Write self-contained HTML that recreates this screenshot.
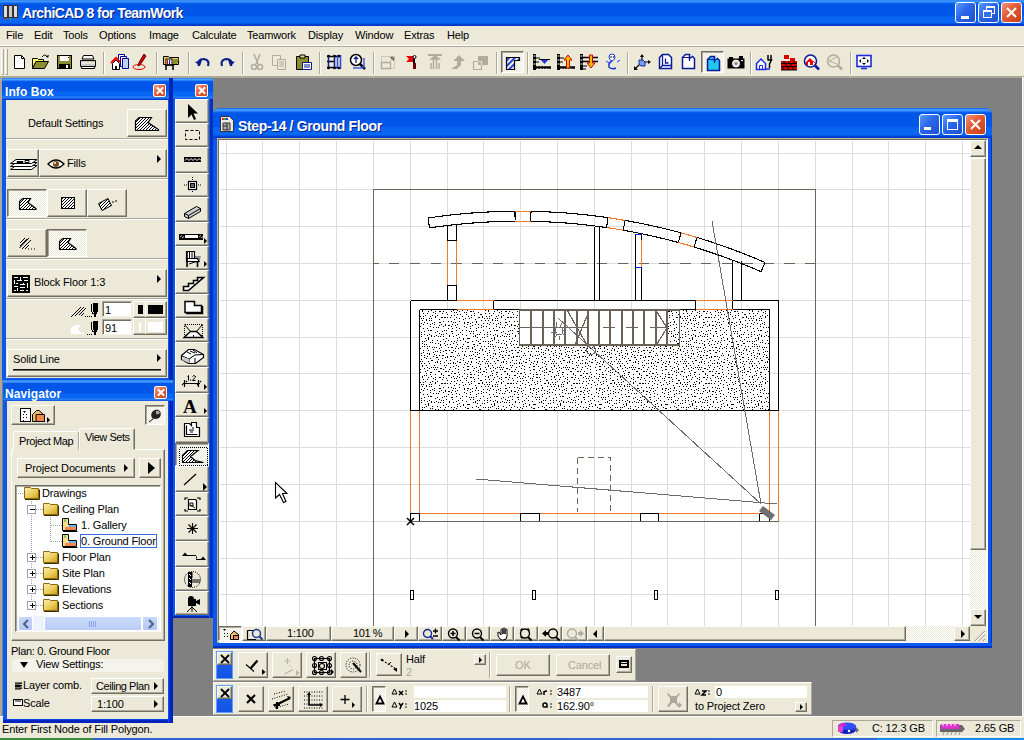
<!DOCTYPE html>
<html><head><meta charset="utf-8">
<style>
*{margin:0;padding:0;box-sizing:border-box}
html,body{width:1024px;height:740px;overflow:hidden;background:#808080;font-family:"Liberation Sans",sans-serif;font-size:11px;color:#000;letter-spacing:-0.15px;-webkit-font-smoothing:antialiased}
.a{position:absolute}
svg{position:absolute;overflow:visible}
#title{left:0;top:0;width:1024px;height:26px;background:linear-gradient(#2a7af5 0,#3d95ff 1px,#3d95ff 2px,#0a60f0 3px,#0056e8 5px,#0056e8 15px,#0866f4 17px,#0866f4 23px,#0046d8 24px,#0032c0 26px)}
#title .t{left:22px;top:5px;color:#fff;font-weight:bold;font-size:14px;letter-spacing:-0.6px;text-shadow:1px 1px 0 #0a1e80}
.xpb{width:21px;height:21px;border:1px solid #fff;border-radius:3px;background:linear-gradient(135deg,#5a9aff,#2a66ea 45%,#1e50d0)}
.xpc{background:linear-gradient(135deg,#f3907a,#e25a34 45%,#c63d16)}
#menu{left:0;top:26px;width:1024px;height:19px;background:#ece9d8}
#menu span{position:absolute;top:3px}
.bg{background:#ece9d8}
.btn{background:#ece9d8;border-style:solid;border-width:1px;border-color:#fff #716f64 #716f64 #fff;box-shadow:inset -1px -1px 0 #aca899}
.prs{background-color:#f2f0e6;background-image:repeating-conic-gradient(#fff 0 25%,#ece9d8 0 50%);background-size:2px 2px;border-style:solid;border-width:1px;border-color:#716f64 #fff #fff #716f64;box-shadow:inset 1px 1px 0 #aca899}
.sepv{width:2px;border-left:1px solid #aca899;border-right:1px solid #fff}
.seph{height:2px;border-top:1px solid #aca899;border-bottom:1px solid #fff}
.tw{background:#0b4fe0}
.twt{background:linear-gradient(#1a6af0 0,#4aa0ff 1px,#4aa0ff 2px,#0a60f0 3px,#0056e8 4px,#0056e8 13px,#0866f4 14px,#0866f4 18px,#2a7cf6 19px,#2a7cf6 20px,#0040d0 21px)}
.twt .tt{position:absolute;left:4px;top:4px;color:#fff;font-weight:bold;font-size:12px;letter-spacing:0.1px}
.cls{width:13px;height:13px;border:1px solid #fff;border-radius:2px;background:linear-gradient(135deg,#f09a80,#e0582f 55%,#c94a25)}
.cls:before,.cls:after{content:"";position:absolute;left:5px;top:1px;width:2px;height:9px;background:#fff;transform:rotate(45deg)}
.cls:after{transform:rotate(-45deg)}
.tri{width:0;height:0;border-style:solid;border-width:4px 0 4px 4px;border-color:transparent transparent transparent #000}
.inp{background:#fff;border-style:solid;border-width:1px;border-color:#aca899 #f4f2ea #f4f2ea #aca899;box-shadow:inset 1px 1px 0 #716f64}
</style></head><body>

<!-- ===== TITLE BAR ===== -->
<div id="title" class="a">
  <svg style="left:3px;top:4px" width="16" height="17" viewBox="0 0 16 17">
    <rect x="0.5" y="1.5" width="4" height="12" fill="#ddd" stroke="#333"/><rect x="5.5" y="1.5" width="4" height="12" fill="#ccc" stroke="#333"/><rect x="10.5" y="1.5" width="4" height="12" fill="#ddd" stroke="#333"/>
    <path d="M1 14l1.5 2.5 1.5-2.5z" fill="#b33"/><path d="M6 14l1.5 2.5 1.5-2.5z" fill="#3a3"/><path d="M11 14l1.5 2.5 1.5-2.5z" fill="#36c"/>
  </svg>
  <div class="a t">ArchiCAD 8 for TeamWork</div>
  <div class="a xpb" style="left:955px;top:2px"><div class="a" style="left:5px;top:13px;width:8px;height:3px;background:#fff"></div></div>
  <div class="a xpb" style="left:978px;top:2px"><div class="a" style="left:7px;top:3px;width:9px;height:8px;border:1px solid #fff;border-top-width:2px"></div><div class="a" style="left:4px;top:7px;width:9px;height:8px;border:1px solid #fff;border-top-width:2px;background:#3670e8"></div></div>
  <div class="a xpb xpc" style="left:1001px;top:2px"><svg style="left:4px;top:4px" width="11" height="11"><path d="M1 1L10 10M10 1L1 10" stroke="#fff" stroke-width="2"/></svg></div>
</div>

<!-- ===== MENU ===== -->
<div id="menu" class="a">
  <span style="left:6px">File</span><span style="left:34px">Edit</span><span style="left:63px">Tools</span><span style="left:99px">Options</span><span style="left:149px">Image</span><span style="left:192px">Calculate</span><span style="left:247px">Teamwork</span><span style="left:308px">Display</span><span style="left:355px">Window</span><span style="left:404px">Extras</span><span style="left:447px">Help</span>
</div>
<div class="a" style="left:0;top:45px;width:1024px;height:1px;background:#fff"></div>
<div class="a" style="left:0;top:46px;width:1024px;height:1px;background:#aca899"></div>
<div class="a bg" style="left:0;top:47px;width:1024px;height:30px"></div>
<div class="a" style="left:0;top:76px;width:1024px;height:2px;background:#aca899"></div>
<div class="a" style="left:1022px;top:77px;width:1px;height:640px;background:#fff"></div><div class="a" style="left:1023px;top:77px;width:1px;height:640px;background:#ece9d8"></div>

<!-- TOOLBAR_PLACEHOLDER -->
<div class="a" style="left:1px;top:49px;width:3px;height:26px;border-left:1px solid #fff;border-right:1px solid #aca899;border-bottom:1px solid #aca899"></div><div class="a" style="left:5px;top:49px;width:3px;height:26px;border-left:1px solid #fff;border-right:1px solid #aca899;border-bottom:1px solid #aca899"></div>
<svg style="left:10px;top:53px" width="20" height="18" viewBox="0 0 20 18"><path d="M4.5 2.5H11.5L14.5 5.5V15.5H4.5Z" fill="#fff" stroke="#000"/><path d="M11.5 2.5V5.5H14.5" fill="none" stroke="#000"/></svg>
<svg style="left:31px;top:53px" width="20" height="18" viewBox="0 0 20 18"><path d="M1.5 5.5H6.5L7.5 6.5H12.5V8.5H5L1.5 15.5Z" fill="#ffff60" stroke="#000"/><path d="M1.5 15.5L5 8.5H17.5L13.5 15.5Z" fill="#8c8c30" stroke="#000"/><path d="M11 4Q14 0 16 4" fill="none" stroke="#000"/><path d="M15 3l2 2 1-3z" fill="#000"/></svg>
<svg style="left:55px;top:53px" width="20" height="18" viewBox="0 0 20 18"><rect x="2.5" y="2.5" width="14" height="13" fill="#8c8c30" stroke="#000"/><rect x="5" y="3" width="9" height="5" fill="#fff"/><rect x="4" y="11" width="11" height="5" fill="#000"/><rect x="11" y="12" width="2" height="3" fill="#fff"/><rect x="13" y="4" width="1" height="1" fill="#000"/></svg>
<svg style="left:78px;top:53px" width="20" height="18" viewBox="0 0 20 18"><path d="M5.5 2.5H14.5L16 6H4Z" fill="#fff" stroke="#000"/><path d="M2.5 7.5H17.5V13.5H2.5Z" fill="#c8c8c8" stroke="#000"/><path d="M3 10h14" stroke="#fff"/><path d="M3.5 13.5H16.5V15.5H3.5Z" fill="#fff" stroke="#000"/><rect x="13" y="9" width="2" height="1" fill="#ff0"/></svg>
<div class="a sepv" style="left:103px;top:52px;height:22px"></div>
<svg style="left:110px;top:53px" width="20" height="18" viewBox="0 0 20 18"><path d="M8.5 1.5H14.5V11.5H8.5Z" fill="#fff" stroke="#0000a0"/><path d="M10.5 3.5H16.5V13.5H10.5Z" fill="#fff" stroke="#0000a0"/><path d="M12.5 5.5H18.5V15.5H12.5Z" fill="#c0d0ff" stroke="#0000a0"/><path d="M2.5 16.5V10.5L6 7L9.5 10.5V16.5Z" fill="#fff" stroke="#000"/><path d="M1 10L6 5L10 9" stroke="#e00" stroke-width="2" fill="none"/><rect x="5" y="13" width="2" height="3" fill="#000"/></svg>
<svg style="left:131px;top:53px" width="20" height="18" viewBox="0 0 20 18"><ellipse cx="8" cy="14" rx="6" ry="2.5" fill="none" stroke="#e00"/><path d="M13 1L15 3L9 12L7 13L7.5 10.5Z" fill="#d00" stroke="#600"/></svg>
<div class="a sepv" style="left:156px;top:52px;height:22px"></div>
<svg style="left:162px;top:53px" width="20" height="18" viewBox="0 0 20 18"><path d="M1.5 3.5H6.5L7.5 4.5H16.5V11.5H1.5Z" fill="#f0d060" stroke="#000"/><path d="M11 6L17 6L15 11H11Z" fill="#8c8c30"/><rect x="4" y="6" width="6" height="6" fill="#fff" stroke="#000"/><rect x="5" y="7" width="1" height="4" fill="#e00"/><rect x="7" y="7" width="1" height="4" fill="#00c"/><path d="M3 12h9M4 12v5M11 12v5" stroke="#000" stroke-width="1.5"/></svg>
<div class="a sepv" style="left:188px;top:52px;height:22px"></div>
<svg style="left:194px;top:53px" width="20" height="18" viewBox="0 0 20 18"><path d="M5 13Q3 6 10 6Q16 7 14 13" fill="none" stroke="#0a1e8a" stroke-width="2.2"/><path d="M1 9L6 13L8 7Z" fill="#0a1e8a"/></svg>
<svg style="left:216px;top:53px" width="20" height="18" viewBox="0 0 20 18"><path d="M15 13Q17 6 10 6Q4 7 6 13" fill="none" stroke="#0a1e8a" stroke-width="2.2"/><path d="M19 9L14 13L12 7Z" fill="#0a1e8a"/></svg>
<div class="a sepv" style="left:242px;top:52px;height:22px"></div>
<svg style="left:247px;top:53px" width="20" height="18" viewBox="0 0 20 18"><path d="M7 1L11 11M13 1L9 11" stroke="#b0ad9e" stroke-width="1.5"/><circle cx="7" cy="14" r="2.5" fill="none" stroke="#b0ad9e" stroke-width="1.5"/><circle cx="13" cy="14" r="2.5" fill="none" stroke="#b0ad9e" stroke-width="1.5"/></svg>
<svg style="left:270px;top:53px" width="20" height="18" viewBox="0 0 20 18"><path d="M2.5 2.5H10.5V12.5H2.5Z" fill="none" stroke="#b0ad9e"/><path d="M7.5 6.5H15.5V16.5H7.5Z" fill="#ece9d8" stroke="#b0ad9e"/><path d="M9 9h5M9 11h5M9 13h5" stroke="#b0ad9e"/></svg>
<svg style="left:294px;top:53px" width="20" height="18" viewBox="0 0 20 18"><path d="M2.5 3.5H14.5V16.5H2.5Z" fill="#8c8c30" stroke="#000"/><path d="M6 2h5v3H6z" fill="#e0e0a0" stroke="#000"/><path d="M8.5 9.5H17.5V16.5H8.5Z" fill="#fff" stroke="#0a1e8a"/><path d="M10 12h6M10 14h6" stroke="#0a1e8a"/></svg>
<div class="a sepv" style="left:319px;top:52px;height:22px"></div>
<svg style="left:324px;top:53px" width="20" height="18" viewBox="0 0 20 18"><path d="M3 3.5H15M3 8.5H10M3 14.5H15" stroke="#000" stroke-width="1.5"/><path d="M4.5 2V16M10.5 2V16" stroke="#0a1e8a" stroke-width="1.5"/><path d="M13.5 2V16M16.5 2V16" stroke="#2a4ae0" stroke-width="1.5"/><g fill="#000"><circle cx="4.5" cy="3" r="1.3"/><circle cx="10.5" cy="3" r="1.3"/><circle cx="15" cy="3" r="1.3"/><circle cx="4.5" cy="15" r="1.3"/><circle cx="10.5" cy="15" r="1.3"/><circle cx="15" cy="15" r="1.3"/></g></svg>
<svg style="left:348px;top:53px" width="20" height="18" viewBox="0 0 20 18"><circle cx="8" cy="7" r="5.5" fill="#fff" stroke="#000" stroke-width="1.5"/><path d="M12 11L17 16" stroke="#000" stroke-width="2.5"/><path d="M8 4V10M6 6l2-2 2 2" stroke="#0a1e8a" stroke-width="1.3" fill="none"/><path d="M16 5V15M14 13l2 2" stroke="#2a4ae0" stroke-width="1.3" fill="none"/><path d="M5 15H14" stroke="#2a4ae0" stroke-width="1.3"/></svg>
<div class="a sepv" style="left:373px;top:52px;height:22px"></div>
<svg style="left:378px;top:53px" width="20" height="18" viewBox="0 0 20 18"><path d="M3.5 3.5H16.5V15.5H3.5Z" fill="none" stroke="#b0ad9e" stroke-dasharray="1 1"/><path d="M3.5 9.5H12.5V15.5H3.5Z" fill="none" stroke="#b0ad9e" stroke-width="1.3"/><path d="M12 4h4v4M16 4l-4 4" stroke="#b0ad9e"/></svg>
<svg style="left:402px;top:53px" width="20" height="18" viewBox="0 0 20 18"><path d="M4 3L12 3L12 9L4 9L7 6Z" fill="#e00"/><path d="M12 3V16" stroke="#000" stroke-width="2"/><path d="M11 10h3v6h-3z" fill="#600"/><circle cx="12.5" cy="4" r="1.5" fill="#fff" stroke="#000"/></svg>
<svg style="left:425px;top:53px" width="20" height="18" viewBox="0 0 20 18"><path d="M3 2H17" stroke="#b0ad9e" stroke-width="2"/><path d="M6 6l4-3 4 3zM8.5 6V16M11.5 6V16M6 10V16M14 10V16" stroke="#b0ad9e" stroke-width="1.5" fill="#b0ad9e"/></svg>
<svg style="left:448px;top:53px" width="20" height="18" viewBox="0 0 20 18"><path d="M11 2L17 8H13V12L9 16H3L9 12V8H5Z" fill="#b0ad9e"/></svg>
<svg style="left:471px;top:53px" width="20" height="18" viewBox="0 0 20 18"><path d="M2.5 8.5H10.5V16.5H2.5Z" fill="none" stroke="#b0ad9e" stroke-width="1.2"/><path d="M7 3h10v9H7z" fill="#b0ad9e"/><path d="M7.5 8.5H10.5V12" stroke="#ece9d8" fill="none"/></svg>
<div class="a sepv" style="left:496px;top:52px;height:22px"></div>
<div class="a prs" style="left:501px;top:51px;width:23px;height:22px"><svg style="left:3px;top:3px" width="16" height="16" viewBox="0 0 16 16"><defs><pattern id="bh" width="4" height="4" patternUnits="userSpaceOnUse" patternTransform="rotate(45)"><rect width="2" height="4" fill="#2a40e0"/></pattern></defs><path d="M1.5 2.5H14.5V5.5H9.5V14.5H1.5Z" fill="url(#bh)" stroke="#000" stroke-width="1.2"/><path d="M9.5 5.5V14.5" stroke="#000"/></svg></div>
<div class="a sepv" style="left:527px;top:52px;height:22px"></div>
<svg style="left:532px;top:53px" width="20" height="18" viewBox="0 0 20 18"><rect x="1" y="1" width="3" height="16" fill="#000"/><path d="M1.5 3h2M1.5 7h2M1.5 11h2" stroke="#fff"/><path d="M4 14.5H19" stroke="#000" stroke-width="2.5"/><path d="M5 16h1M8 16h1M11 16h1M14 16h1" stroke="#fff"/><path d="M8 6H17L12.5 11Z" fill="#1a3ae0"/><path d="M7 6.5H18" stroke="#000"/><path d="M4 5h4M4 9h3" stroke="#000"/></svg>
<svg style="left:556px;top:53px" width="20" height="18" viewBox="0 0 20 18"><rect x="1" y="1" width="3" height="16" fill="#000"/><path d="M1.5 3h2M1.5 7h2M1.5 11h2" stroke="#fff"/><path d="M4 14.5H19" stroke="#000" stroke-width="2.5"/><path d="M5 16h1M8 16h1M11 16h1M14 16h1" stroke="#fff"/><path d="M8 7L12 2L16 7H13.5V15H10.5V7Z" fill="#f0c000" stroke="#c00"/><path d="M4 5h4M4 9h3" stroke="#000"/></svg>
<svg style="left:579px;top:53px" width="20" height="18" viewBox="0 0 20 18"><rect x="1" y="1" width="3" height="16" fill="#000"/><path d="M1.5 3h2M1.5 7h2M1.5 11h2" stroke="#fff"/><path d="M4 4.5H19M4 8.5H19" stroke="#000" stroke-width="1.5"/><path d="M8 10L12 15L16 10H13.5V2H10.5V10Z" fill="#f0c000" stroke="#c00"/><path d="M4 13h4M4 16h3" stroke="#000"/></svg>
<svg style="left:602px;top:53px" width="20" height="18" viewBox="0 0 20 18"><path d="M7 4Q7 1 10 1Q13 1 13 4Q13 7 10 8Q7 7 7 4Z" fill="#fff" stroke="#1a3ae0"/><path d="M10 8Q6 10 7 14Q10 17 14 15" fill="none" stroke="#1a3ae0" stroke-width="1.5"/><path d="M4 8l3 2M15 9l3-2" stroke="#1a3ae0"/><circle cx="9" cy="4" r="0.8" fill="#000"/><circle cx="11.5" cy="4" r="0.8" fill="#000"/></svg>
<div class="a sepv" style="left:627px;top:52px;height:22px"></div>
<svg style="left:632px;top:53px" width="20" height="18" viewBox="0 0 20 18"><path d="M10 2V9M10 9H18M10 9L3 16" stroke="#000" stroke-width="1.2"/><path d="M8 4l2-3 2 3zM16 7l3 2-3 2zM2 13l0 4 4 0z" fill="#000"/><path d="M7 7l4 0 2 2v4h-4l-2-2z" fill="#7a9af0" stroke="#1a2aa0"/></svg>
<svg style="left:656px;top:53px" width="20" height="18" viewBox="0 0 20 18"><path d="M3.5 4.5L6.5 1.5H12.5L15.5 4.5V15.5H3.5Z" fill="#fff" stroke="#0a1a9a" stroke-width="1.5"/><path d="M6.5 1.5V12.5H15.5M6.5 12.5L3.5 15.5M9.5 5.5V10H12.5" stroke="#0a1a9a" stroke-width="1.3" fill="none"/></svg>
<svg style="left:679px;top:53px" width="20" height="18" viewBox="0 0 20 18"><path d="M3.5 4.5L6.5 1.5H10.5L10.5 5.5L13.5 3.5L15.5 5.5V15.5H3.5Z" fill="#fff" stroke="#0a1a9a" stroke-width="1.5"/><path d="M3.5 4.5H10.5M10.5 5.5V8" stroke="#0a1a9a" stroke-width="1.2" fill="none"/></svg>
<div class="a prs" style="left:701px;top:51px;width:23px;height:22px"><svg style="left:2px;top:2px" width="18" height="18" viewBox="0 0 18 18"><path d="M3.5 5.5L6.5 2.5H10.5V6.5L13.5 4.5L15.5 6.5V16.5H3.5Z" fill="#20c8f0" stroke="#0a1a9a" stroke-width="1.5"/><path d="M3.5 5.5H10.5V9" stroke="#0a1a9a" stroke-width="1.2" fill="none"/></svg></div>
<svg style="left:726px;top:53px" width="20" height="18" viewBox="0 0 20 18"><rect x="1.5" y="5.5" width="17" height="10" fill="#000"/><path d="M3 4h4v2H3zM13 3h4v3h-4z" fill="#000"/><circle cx="10" cy="10.5" r="3.5" fill="#ddd" stroke="#fff"/><circle cx="10" cy="10.5" r="1.5" fill="#888"/><rect x="15" y="7" width="2" height="1" fill="#fff"/></svg>
<div class="a sepv" style="left:750px;top:52px;height:22px"></div>
<svg style="left:754px;top:53px" width="20" height="18" viewBox="0 0 20 18"><path d="M2.5 16.5V10.5L7 6L11.5 10.5V16.5Z" fill="#fff" stroke="#1a2ae0" stroke-width="1.5"/><path d="M5.5 16V12.5H8.5V16" stroke="#1a2ae0" fill="none"/><path d="M14 2V7M17 2V7M13.5 7H17.5L15.5 11V15" stroke="#000" stroke-width="1.5" fill="none"/><path d="M11 16h5" stroke="#1a2ae0" stroke-width="1.5"/></svg>
<svg style="left:779px;top:53px" width="20" height="18" viewBox="0 0 20 18"><rect x="2" y="8" width="16" height="9" fill="#d00"/><rect x="5" y="2" width="5" height="4" fill="#d00"/><rect x="11" y="5" width="5" height="3" fill="#d00"/><path d="M2 10.5H18M2 13.5H18M5 8V11M10 8V11M15 8V11M7 11V14M12 11V14M4 14V17M9 14V17M14 14V17" stroke="#000"/><path d="M2 17H18" stroke="#000"/></svg>
<svg style="left:802px;top:53px" width="20" height="18" viewBox="0 0 20 18"><circle cx="8.5" cy="8" r="6" fill="#fff" stroke="#0a1a9a" stroke-width="1.6"/><path d="M13 12.5L17 16.5" stroke="#0a1a9a" stroke-width="2.5"/><path d="M4 9L8 5L11 8V12H4Z" fill="#e00"/><rect x="6" y="9" width="2" height="3" fill="#fff"/><path d="M11 8l2 2" stroke="#e00"/></svg>
<svg style="left:825px;top:53px" width="20" height="18" viewBox="0 0 20 18"><circle cx="8.5" cy="8" r="6" fill="none" stroke="#b0ad9e" stroke-width="1.6"/><path d="M13 12.5L17 16.5" stroke="#b0ad9e" stroke-width="2.5"/><path d="M4 8L12 4M4 8L12 11" stroke="#b0ad9e"/></svg>
<div class="a sepv" style="left:850px;top:52px;height:22px"></div>
<svg style="left:855px;top:53px" width="20" height="18" viewBox="0 0 20 18"><rect x="2" y="2.5" width="14" height="11" fill="#fff" stroke="#1a2ae0" stroke-width="1.6"/><path d="M9 4l-2 2h4zM9 12l-2-2h4zM4 8l2-2v4zM14 8l-2-2v4z" fill="#000"/><path d="M6 15.5h6" stroke="#1a2ae0" stroke-width="1.5"/></svg>
<!-- /TOOLBAR -->

<!-- BOTTOM_PLACEHOLDER -->
<!-- ===== CONTROL BAR 1 ===== -->
<div class="a bg" style="left:213px;top:649px;width:423px;height:32px;border-top:1px solid #fff;border-left:1px solid #fff;border-right:1px solid #aca899;border-bottom:1px solid #aca899"></div>
<div class="a" style="left:216px;top:651px;width:17px;height:28px;border:1px solid #5aa0ff;background:linear-gradient(#2a6af5,#1a5cf0 50%,#1452e0)"></div>
<div class="a btn" style="left:217px;top:652px;width:15px;height:13px"><svg style="left:2px;top:1px" width="11" height="11"><path d="M1 1L9 9M9 1L1 9" stroke="#000" stroke-width="1.8"/></svg></div>
<div class="a btn" style="left:238px;top:652px;width:30px;height:26px"><svg style="left:0;top:0" width="30" height="26" viewBox="238 652 30 26"><path d="M245 663.5L253 670.5" stroke="#000" stroke-width="1.1"/><path d="M249.5 667.5L256.5 659.5" stroke="#000" stroke-width="2.2"/><path d="M261 668l3.5 3-3.5 3z" fill="#000"/></svg></div>
<div class="a btn" style="left:272px;top:652px;width:30px;height:26px"><svg style="left:0;top:0" width="30" height="26" viewBox="272 652 30 26"><path d="M286.5 657v6M283.5 660h6" stroke="#b8b5a6" stroke-width="1.1"/><path d="M288 664l1 1M290 666l1 1" stroke="#b8b5a6"/><path d="M283.5 673L292 668.5" stroke="#b8b5a6" stroke-width="1.3"/><path d="M295 669l3.5 3-3.5 3z" fill="#b8b5a6"/></svg></div>
<div class="a btn" style="left:306px;top:652px;width:30px;height:26px"><svg style="left:0;top:0" width="30" height="26" viewBox="306 652 30 26"><rect x="313.5" y="657.5" width="15" height="14" fill="none" stroke="#000" stroke-width="1.2"/><rect x="317.5" y="661.5" width="8" height="7" fill="none" stroke="#000"/><g fill="none" stroke="#000" stroke-width="1.1"><circle cx="313.5" cy="657.5" r="2"/><circle cx="320.5" cy="657.5" r="2"/><circle cx="328.5" cy="657.5" r="2"/><circle cx="313.5" cy="664.5" r="2"/><circle cx="328.5" cy="664.5" r="2"/><circle cx="313.5" cy="671.5" r="2"/><circle cx="320.5" cy="671.5" r="2"/><circle cx="328.5" cy="671.5" r="2"/><circle cx="321" cy="665" r="2.5"/></g><path d="M330 668l3 3-3 3z" fill="#000"/></svg></div>
<div class="a btn" style="left:340px;top:652px;width:27px;height:26px"><svg style="left:3px;top:3px" width="20" height="20" viewBox="0 0 20 20"><circle cx="9" cy="9" r="7" fill="none" stroke="#000" stroke-dasharray="1 1.5"/><circle cx="9" cy="9" r="4" fill="none" stroke="#000" stroke-dasharray="1 1.5"/><path d="M9 7L17 16" stroke="#000" stroke-width="2"/></svg></div>
<div class="a sepv" style="left:369px;top:652px;height:26px"></div>
<div class="a btn" style="left:376px;top:653px;width:26px;height:23px"><svg style="left:3px;top:3px" width="20" height="16" viewBox="0 0 20 16"><path d="M2 3L16 12" stroke="#000" stroke-dasharray="2 1.5" stroke-width="1.2"/><circle cx="2" cy="3" r="1.3"/><path d="M13 12l4-1v4z" fill="#000"/><path d="M8 8l3-3" stroke="#000"/></svg></div>
<div class="a" style="left:406px;top:653px">Half</div>
<div class="a" style="left:406px;top:666px;color:#aca899">2</div>
<div class="a btn" style="left:474px;top:654px;width:12px;height:11px"><div class="a tri" style="left:4px;top:2px;border-width:3px 0 3px 3px"></div></div>
<div class="a sepv" style="left:489px;top:652px;height:26px"></div>
<div class="a btn" style="left:496px;top:654px;width:54px;height:22px"><span class="a" style="left:18px;top:4px;color:#aca899">OK</span></div>
<div class="a btn" style="left:556px;top:654px;width:54px;height:22px"><span class="a" style="left:11px;top:4px;color:#aca899">Cancel</span></div>
<div class="a btn" style="left:616px;top:656px;width:16px;height:17px"><div class="a" style="left:2px;top:3px;width:10px;height:8px;border:2px solid #000;border-top-width:2px"></div><div class="a" style="left:4px;top:6px;width:6px;height:1px;background:#000"></div></div>

<!-- ===== CONTROL BAR 2 ===== -->
<div class="a bg" style="left:213px;top:682px;width:599px;height:33px;border-top:1px solid #fff;border-left:1px solid #fff;border-right:1px solid #aca899;border-bottom:1px solid #aca899"></div>
<div class="a" style="left:216px;top:685px;width:17px;height:28px;border:1px solid #5aa0ff;background:linear-gradient(#2a6af5,#1a5cf0 50%,#1452e0)"></div>
<div class="a btn" style="left:217px;top:686px;width:15px;height:13px"><svg style="left:2px;top:1px" width="11" height="11"><path d="M1 1L9 9M9 1L1 9" stroke="#000" stroke-width="1.8"/></svg></div>
<div class="a btn" style="left:238px;top:686px;width:26px;height:26px"><svg style="left:6px;top:6px" width="12" height="12" viewBox="0 0 12 12"><path d="M2 2L10 10M10 2L2 10" stroke="#000" stroke-width="2.2"/></svg></div>
<div class="a btn" style="left:268px;top:686px;width:26px;height:26px"><svg style="left:1px;top:2px" width="24" height="22" viewBox="0 0 24 22"><path d="M4 5l12 -3M2 10l16-5M3 16l16-6M5 19l14-4" stroke="#000" stroke-dasharray="1 1.5" fill="none"/><path d="M4 17L20 9" stroke="#000" stroke-width="2"/><path d="M17 7l4 1-2 3z" fill="#000"/><path d="M7 13v7M4 16h6" stroke="#000" stroke-width="2"/></svg></div>
<div class="a btn" style="left:298px;top:686px;width:30px;height:26px"><svg style="left:2px;top:2px" width="26" height="22" viewBox="0 0 26 22"><g stroke="#000" stroke-dasharray="1 1.5" fill="none"><path d="M3 3h20M3 7h20M3 11h20M3 15h20M3 19h20"/></g><path d="M8 4V16H21" stroke="#000" stroke-width="1.6" fill="none"/><path d="M6 6l2-3 2 3zM19 14l3 2-3 2z" fill="#000"/></svg></div>
<div class="a btn" style="left:332px;top:686px;width:30px;height:26px"><svg style="left:6px;top:5px" width="20" height="18" viewBox="0 0 20 18"><path d="M6 3v9M1.5 7.5h9" stroke="#000" stroke-width="1.3"/><path d="M13 10l3 3-3 3z" fill="#000"/></svg></div>
<div class="a sepv" style="left:366px;top:686px;height:26px"></div>
<div class="a prs" style="left:372px;top:686px;width:14px;height:26px"><svg style="left:1px;top:7px" width="12" height="12" viewBox="0 0 12 12"><path d="M1 10.5L6 0.5L11 10.5Z" fill="#000"/><path d="M4 8.5L6 4.5L8 8.5Z" fill="#fff"/></svg></div>
<svg style="left:391px;top:688px" width="22" height="22" viewBox="0 0 22 22"><path d="M3.5 1L6 6H1Z" fill="none" stroke="#000"/><path d="M8 3l4 4M12 3l-4 4" stroke="#000" stroke-width="1.5"/><circle cx="15" cy="3" r="0.8"/><circle cx="15" cy="6" r="0.8"/><path d="M3.5 14L6 19H1Z" fill="none" stroke="#000"/><path d="M8 15l2 3l2-3M10 18l-1 3" stroke="#000" stroke-width="1.5" fill="none"/><circle cx="15" cy="16" r="0.8"/><circle cx="15" cy="19" r="0.8"/></svg>
<div class="a" style="left:414px;top:686px;width:92px;height:12px;background:#fff"></div>
<div class="a" style="left:414px;top:700px;width:92px;height:12px;background:#fff"></div>
<span class="a" style="left:414px;top:700px">1025</span>
<div class="a sepv" style="left:509px;top:686px;height:26px"></div>
<div class="a prs" style="left:515px;top:686px;width:14px;height:26px"><svg style="left:1px;top:7px" width="12" height="12" viewBox="0 0 12 12"><path d="M1 10.5L6 0.5L11 10.5Z" fill="#000"/><path d="M4 8.5L6 4.5L8 8.5Z" fill="#fff"/></svg></div>
<svg style="left:534px;top:688px" width="22" height="22" viewBox="0 0 22 22"><path d="M5.5 1L8 6H3Z" fill="none" stroke="#000"/><path d="M10 3v4M10 4q1-1 3-1" stroke="#000" stroke-width="1.5" fill="none"/><circle cx="17" cy="3" r="0.8"/><circle cx="17" cy="6" r="0.8"/><path d="M9 17q0-2 2-2t2 2v2h-3q-1 0-1-1z" fill="none" stroke="#000" stroke-width="1.5"/><circle cx="17" cy="16" r="0.8"/><circle cx="17" cy="19" r="0.8"/></svg>
<div class="a" style="left:557px;top:686px;width:91px;height:12px;background:#fff"></div>
<div class="a" style="left:557px;top:700px;width:91px;height:12px;background:#fff"></div>
<span class="a" style="left:557px;top:686px">3487</span>
<span class="a" style="left:557px;top:700px">162.90°</span>
<div class="a sepv" style="left:652px;top:686px;height:26px"></div>
<div class="a btn" style="left:658px;top:686px;width:30px;height:26px"><svg style="left:5px;top:4px" width="20" height="18" viewBox="0 0 20 18"><path d="M4 2l3 3h5l3-3 1 1-3 4v4l3 4-2 1-3-4h-3l-3 4-2-1 3-4V7L3 3z" fill="#aca899"/><path d="M15 11l3 3-3 3z" fill="#aca899"/></svg></div>
<svg style="left:694px;top:688px" width="20" height="10" viewBox="0 0 20 10"><path d="M3.5 1L6 6H1Z" fill="none" stroke="#000"/><path d="M8 3h4l-4 4h4" stroke="#000" stroke-width="1.5" fill="none"/><circle cx="15" cy="3" r="0.8"/><circle cx="15" cy="6" r="0.8"/></svg>
<div class="a" style="left:715px;top:686px;width:92px;height:12px;background:#fff"></div>
<span class="a" style="left:716px;top:686px">0</span>
<span class="a" style="left:695px;top:700px">to Project Zero</span>
<div class="a btn" style="left:795px;top:702px;width:12px;height:10px"><div class="a tri" style="left:4px;top:1px;border-width:3px 0 3px 3px"></div></div>

<!-- ===== STATUS BAR ===== -->
<div class="a bg" style="left:0;top:716px;width:1024px;height:22px;border-top:1px solid #fff"></div>
<div class="a" style="left:2px;top:723px">Enter First Node of Fill Polygon.</div>
<div class="a" style="left:832px;top:720px;width:101px;height:17px;border:1px solid;border-color:#aca899 #fff #fff #aca899"></div>
<svg style="left:836px;top:722px" width="24" height="14" viewBox="0 0 24 14"><ellipse cx="11" cy="8" rx="9" ry="4" fill="#1020c0"/><rect x="2" y="4" width="18" height="4" fill="#2840e0"/><ellipse cx="11" cy="4" rx="9" ry="3.5" fill="#3050ff"/><path d="M2 3l6-2 3 2-6 2z" fill="#e020c0"/><rect x="2" y="4" width="5" height="6" fill="#e040d0"/><circle cx="13" cy="9" r="1.2" fill="#fff"/><path d="M20 5l3 3-3 3z" fill="#707070"/></svg>
<div class="a" style="left:872px;top:722px">C: 12.3 GB</div>
<div class="a" style="left:936px;top:720px;width:85px;height:17px;border:1px solid;border-color:#aca899 #fff #fff #aca899"></div>
<svg style="left:939px;top:722px" width="30" height="13" viewBox="0 0 30 13"><path d="M1 3h22l3 4-3 3H1z" fill="#666"/><path d="M2 2h18v5H2z" fill="#e030d0"/><path d="M3 3h2M7 3h2M11 3h2M15 3h2" stroke="#fff"/><path d="M5 10l-1 3M9 10l-1 3M13 10l-1 3M17 10l-1 3M21 10l-1 3" stroke="#999"/></svg>
<div class="a" style="left:975px;top:722px">2.65 GB</div>
<div class="a" style="left:0;top:738px;width:1024px;height:2px;background:linear-gradient(90deg,#3a8e3a 0,#3a8e3a 93px,#2f62d4 93px,#3168d8 877px,#1a8cec 877px)"></div>
<!-- /BOTTOM -->
<!-- ===== INFO BOX ===== -->
<div class="a" style="left:0;top:77px;width:2px;height:639px;background:#aca899"></div>
<div class="a tw" style="left:2px;top:78px;width:169px;height:302px;background:#0b58ee"></div>
<div class="a twt" style="left:2px;top:78px;width:169px;height:22px"><div class="tt" style="left:3px;top:7px">Info Box</div></div>
<div class="a cls" style="left:153px;top:84px"></div>
<div class="a" style="left:169px;top:78px;width:2px;height:302px;background:#0228b0"></div>
<div class="a bg" style="left:6px;top:100px;width:162px;height:278px"></div>
<!-- row1 -->
<div class="a" style="left:28px;top:117px">Default Settings</div>
<div class="a btn" style="left:127px;top:109px;width:40px;height:28px">
  <svg style="left:7px;top:7px" width="25" height="14" viewBox="0 0 25 14"><defs><pattern id="h1" width="3" height="3" patternUnits="userSpaceOnUse"><rect width="3" height="3" fill="#fff"/><path d="M2 0h1v1h-1zM1 1h1v1h-1zM0 2h1v1h-1z" fill="#000"/></pattern></defs><path d="M4 0.5H16.5L13 5.5L23.5 12.5V13.5H0.5V4Z" fill="url(#h1)" stroke="#000" stroke-width="1.2"/></svg>
</div>
<div class="a seph" style="left:6px;top:138px;width:162px"></div>
<!-- row2 -->
<div class="a btn" style="left:7px;top:149px;width:32px;height:28px">
  <svg style="left:2px;top:6px" width="28" height="16" viewBox="0 0 28 16"><g fill="#fff" stroke="#000"><path d="M0.5 13.5L6 9.5H27L21.5 13.5Z"/><path d="M0.5 10.5L6 6.5H27L21.5 10.5Z"/><path d="M0.5 7.5L6 3.5H27L21.5 7.5Z"/><path d="M7 5.5h6v1h-6zM15 4.5h4v2h-4z"/></g></svg>
</div>
<div class="a btn" style="left:39px;top:149px;width:128px;height:28px">
  <svg style="left:7px;top:9px" width="18" height="10" viewBox="0 0 18 10"><path d="M1 5Q9 -3 17 5Q9 13 1 5Z" fill="#fff" stroke="#000" stroke-width="1.3"/><circle cx="9" cy="5" r="3" fill="#7a4a10"/><circle cx="8" cy="4" r="1" fill="#fff"/></svg>
  <div class="a" style="left:27px;top:7px">Fills</div>
  <div class="a tri" style="left:117px;top:5px;border-width:4px 0 4px 4px"></div>
</div>
<div class="a seph" style="left:6px;top:178px;width:162px"></div>
<!-- row3 -->
<div class="a prs" style="left:7px;top:189px;width:40px;height:28px">
  <svg style="left:11px;top:8px" width="18" height="12" viewBox="0 0 18 12"><path d="M3.5 0.5H11.5L9 4.5L17 10.5V11.5H0.5V3.5Z" fill="url(#h1)" stroke="#000" stroke-width="1.2"/></svg>
</div>
<div class="a btn" style="left:47px;top:189px;width:40px;height:28px">
  <svg style="left:13px;top:7px" width="14" height="12" viewBox="0 0 14 12"><rect x="0.5" y="0.5" width="13" height="11" fill="url(#h1)" stroke="#000"/></svg>
</div>
<div class="a btn" style="left:87px;top:189px;width:40px;height:28px">
  <svg style="left:9px;top:5px" width="22" height="16" viewBox="0 0 22 16"><path d="M1.5 8.5L11 3.5L14.5 10.5L5 15.5Z" fill="url(#h1)" stroke="#000"/><path d="M15 7h2M18 6h2" stroke="#000"/></svg>
</div>
<div class="a seph" style="left:6px;top:218px;width:162px"></div>
<!-- row4 -->
<div class="a btn" style="left:7px;top:229px;width:40px;height:28px">
  <svg style="left:11px;top:7px" width="20" height="13" viewBox="0 0 20 13"><defs><pattern id="h2" width="3" height="3" patternUnits="userSpaceOnUse" patternTransform="rotate(45)"><rect width="1.2" height="3" fill="#000"/></pattern></defs><path d="M0.5 11L10 1M3 12L12 3M6 12L10 8M9 12h1M12 12h1M15 12h1" stroke="#000" fill="none"/><path d="M1 6L6 1M1 9L8 2" stroke="#000"/></svg>
</div>
<div class="a prs" style="left:47px;top:229px;width:40px;height:28px">
  <svg style="left:11px;top:8px" width="18" height="12" viewBox="0 0 18 12"><path d="M3.5 0.5H11.5L9 4.5L17 10.5V11.5H0.5V3.5Z" fill="url(#h1)" stroke="#000" stroke-width="1.2"/></svg>
</div>
<div class="a seph" style="left:6px;top:258px;width:162px"></div>
<!-- row5 -->
<div class="a btn" style="left:7px;top:269px;width:160px;height:28px">
  <svg style="left:4px;top:5px" width="18" height="18" viewBox="0 0 18 18"><rect width="18" height="18" fill="#000"/><g fill="#fff"><rect x="2" y="2" width="4" height="1"/><rect x="8" y="2" width="1" height="4"/><rect x="11" y="2" width="5" height="1"/><rect x="2" y="5" width="1" height="4"/><rect x="5" y="5" width="5" height="1"/><rect x="12" y="5" width="4" height="1"/><rect x="2" y="11" width="4" height="1"/><rect x="8" y="9" width="5" height="1"/><rect x="15" y="8" width="1" height="5"/><rect x="5" y="13" width="1" height="3"/><rect x="8" y="12" width="5" height="1"/><rect x="2" y="15" width="2" height="1"/><rect x="8" y="15" width="4" height="1"/><rect x="14" y="15" width="2" height="1"/><rect x="11" y="8" width="1" height="1"/><rect x="4" y="8" width="2" height="1"/></g></svg>
  <div class="a" style="left:26px;top:6px">Block Floor 1:3</div>
  <div class="a tri" style="left:149px;top:5px"></div>
</div>
<div class="a seph" style="left:6px;top:298px;width:162px"></div>
<!-- row6 -->
<svg style="left:70px;top:303px" width="32" height="32" viewBox="0 0 32 32" shape-rendering="crispEdges">
  <path d="M1 13h1v-1h1v-1h1v-1h1v-1h1v-1h1v-1h1v-1h1v-1h1v-1h1v1h-1v1h-1v1h-1v1h-1v1h-1v1h-1v1h-1v1h-1v1h-1v1h-1z" fill="#000"/>
  <path d="M4 13h1v-1h1v-1h1v-1h1v-1h1v-1h1v-1h1v-1h1v-1h1v-1h1v1h-1v1h-1v1h-1v1h-1v1h-1v1h-1v1h-1v1h-1v1h-1z" fill="#000"/>
  <path d="M7 13h1v-1h1v-1h1v-1h1v-1h1v-1h1v-1h1v-1h1v-1h1v1h-1v1h-1v1h-1v1h-1v1h-1v1h-1v1h-1z" fill="#000"/>
  <path d="M10 13h1v-1h1v-1h1v-1h1v1h-1v1h-1v1h-1z" fill="#000"/>
  <path d="M15 13h1v1h-1zM17 13h1v1h-1zM19 13h1v1h-1zM21 13h1v1h-1z" fill="#000"/>
  <rect x="21" y="1" width="1" height="8" fill="#000"/><rect x="23" y="0" width="5" height="9" fill="#000"/><path d="M22 9h5v2h-1v3h-2v-3h-2z" fill="#000"/><rect x="23" y="9" width="1" height="1" fill="#fff"/>
  <path d="M1 31V25L5 22H11L7 26L11 30H14V31Z" fill="#fff"/>
  <path d="M17 31h1v1h-1zM19 31h1v1h-1zM21 31h1v1h-1z" fill="#000"/>
  <rect x="21" y="19" width="1" height="8" fill="#000"/><rect x="23" y="18" width="5" height="9" fill="#000"/><path d="M22 27h5v2h-1v3h-2v-3h-2z" fill="#000"/><rect x="23" y="27" width="1" height="1" fill="#fff"/>
</svg>
<div class="a inp" style="left:102px;top:301px;width:30px;height:16px"><span class="a" style="left:2px;top:2px">1</span></div>
<div class="a inp" style="left:102px;top:319px;width:30px;height:16px"><span class="a" style="left:2px;top:2px">91</span></div>
<div class="a btn" style="left:133px;top:301px;width:34px;height:17px"><div class="a" style="left:4px;top:3px;width:5px;height:9px;background:#000"></div><div class="a" style="left:14px;top:3px;width:15px;height:9px;background:#000"></div><div class="a" style="left:11px;top:0;width:1px;height:15px;background:#fff"></div></div>
<div class="a btn" style="left:133px;top:318px;width:34px;height:17px"><div class="a" style="left:5px;top:3px;width:2px;height:10px;background:#fff"></div><div class="a" style="left:14px;top:3px;width:15px;height:10px;background:#fff"></div><div class="a" style="left:11px;top:0;width:1px;height:15px;background:#fff"></div></div>
<div class="a seph" style="left:6px;top:338px;width:162px"></div>
<!-- row7 -->
<div class="a btn" style="left:7px;top:349px;width:160px;height:28px">
  <div class="a" style="left:5px;top:3px">Solid Line</div>
  <div class="a tri" style="left:149px;top:4px"></div>
  <div class="a" style="left:5px;top:19px;width:148px;height:2px;background:linear-gradient(#111 0,#111 1px,#666 1px)"></div>
</div>

<!-- ===== TOOLBOX ===== -->
<div class="a" style="left:171px;top:78px;width:42px;height:540px;background:#0b58ee;border-bottom:2px solid #0228b0"></div>
<div class="a twt" style="left:171px;top:78px;width:42px;height:21px"></div>
<div class="a" style="left:171px;top:78px;width:2px;height:540px;background:#0228b0"></div>
<div class="a cls" style="left:195px;top:84px"></div>
<div class="a bg" style="left:175px;top:99px;width:34px;height:515px"></div><div class="a" style="left:209px;top:99px;width:4px;height:519px;background:linear-gradient(90deg,#0b58ee 0,#0b58ee 1px,#0030c8 1px)"></div>
<!-- TOOLS_PLACEHOLDER -->
<div class="a btn" style="left:175px;top:99px;width:34px;height:24px"><svg style="left:-1px;top:-1px" width="36" height="26" viewBox="0 0 36 26"><path d="M13 5L13 19L16.5 15.5L19 21L21 20L18.5 14.5H23Z" fill="#000"/></svg></div>
<div class="a btn" style="left:175px;top:123px;width:34px;height:24px"><svg style="left:-1px;top:-1px" width="36" height="26" viewBox="0 0 36 26"><rect x="10.5" y="7.5" width="14" height="9" fill="none" stroke="#000" stroke-dasharray="3 2"/></svg></div>
<div class="a btn" style="left:175px;top:147px;width:34px;height:26px"><svg style="left:-1px;top:-1px" width="36" height="28" viewBox="0 0 36 28"><rect x="9" y="10" width="17" height="5" fill="#000"/><path d="M10 13.5l2-2 2 2 2-2 2 2 2-2 2 2 2-2 2 2" stroke="#fff" fill="none"/></svg></div>
<div class="a btn" style="left:175px;top:173px;width:34px;height:24px"><svg style="left:-1px;top:-1px" width="36" height="26" viewBox="0 0 36 26"><path d="M17.5 4v16M9 12h17" stroke="#000" stroke-dasharray="1 1"/><rect x="13.5" y="8.5" width="8" height="8" fill="#fff" stroke="#000" stroke-width="1.2"/><rect x="15.5" y="10.5" width="4" height="4" fill="#666" stroke="#000"/></svg></div>
<div class="a btn" style="left:175px;top:197px;width:34px;height:25px"><svg style="left:-1px;top:-1px" width="36" height="27" viewBox="0 0 36 27"><path d="M9.5 16.5L21.5 9.5L25.5 11.5V14.5L13.5 21.5L9.5 19.5Z" fill="#ccc" stroke="#000"/><path d="M9.5 16.5L13.5 18.5L25.5 11.5M13.5 18.5V21.5" stroke="#000" fill="none"/></svg></div>
<div class="a btn" style="left:175px;top:222px;width:34px;height:24px"><svg style="left:-1px;top:-1px" width="36" height="26" viewBox="0 0 36 26"><rect x="4" y="12" width="24" height="6" fill="#000"/><rect x="10" y="13" width="13" height="3" fill="#fff"/><path d="M5 15l2-1.5M7 16l2-1.5M24 15l2-1.5M26 16l2-1.5" stroke="#fff" stroke-width="0.8"/><path d="M29 16l3 3-3 3z" fill="#000"/></svg></div>
<div class="a btn" style="left:175px;top:246px;width:34px;height:24px"><svg style="left:-1px;top:-1px" width="36" height="26" viewBox="0 0 36 26"><path d="M20 10l6 0-2 7h-4z" fill="#909090"/><path d="M11.5 5.5h8v7h-8z" fill="#fff" stroke="#000" stroke-width="1.2"/><path d="M14.5 6v6M17 6v6" stroke="#000"/><path d="M11.5 12.5h11l1.5 3h-12.5z" fill="#fff" stroke="#000" stroke-width="1.2"/><path d="M12 5v16M22.5 15v6" stroke="#000" stroke-width="1.6"/><path d="M14 18l6-2" stroke="#000"/><path d="M29 15l3 3-3 3z" fill="#000"/></svg></div>
<div class="a btn" style="left:175px;top:270px;width:34px;height:24px"><svg style="left:-1px;top:-1px" width="36" height="26" viewBox="0 0 36 26"><path d="M8.5 18.5V16.5H13.5V13.5H18.5V10.5H22.5V7.5H28.5L13.5 20.5H8.5Z" fill="#fff" stroke="#000" stroke-width="1.6" stroke-linejoin="miter"/></svg></div>
<div class="a btn" style="left:175px;top:294px;width:34px;height:24px"><svg style="left:-1px;top:-1px" width="36" height="26" viewBox="0 0 36 26"><path d="M10 7.5H19.5V11.5H26.5V18.5H10Z" fill="#fff" stroke="#000" stroke-width="1.5"/><path d="M11 19.5H27.5V12" stroke="#000" stroke-width="1.5" fill="none"/></svg></div>
<div class="a btn" style="left:175px;top:318px;width:34px;height:24px"><svg style="left:-1px;top:-1px" width="36" height="26" viewBox="0 0 36 26"><rect x="9.5" y="6.5" width="18" height="11" fill="none" stroke="#000" stroke-dasharray="1 1" shape-rendering="crispEdges"/><path d="M9 19.5L15.5 13.5H21.5L28 19.5Z" fill="#fff" stroke="#000" stroke-width="1.3"/><path d="M9.5 6.5L15.5 13.5M27.5 6.5L21.5 13.5M18.5 17v2.5" stroke="#000"/></svg></div>
<div class="a btn" style="left:175px;top:342px;width:34px;height:25px"><svg style="left:-1px;top:-1px" width="36" height="27" viewBox="0 0 36 27"><path d="M6.5 13.5L13.5 7.5H19.5L28.5 12.5V15.5L20.5 21.5H13.5L6.5 17.5Z" fill="#fff" stroke="#000" stroke-width="1.2"/><path d="M7 14L14 17L20 13L28 12.5M14 17V21M20 21.5V16" stroke="#000" fill="none"/><path d="M8 15l6 2v4l-7-3z" fill="#c8c8c8"/><path d="M12 10l4 2M15 9l5 2M18 8l4 3" stroke="#000"/></svg></div>
<div class="a btn" style="left:175px;top:367px;width:34px;height:26px"><svg style="left:-1px;top:-1px" width="36" height="28" viewBox="0 0 36 28"><path d="M8 16.5H25M9.5 13v7M23.5 13v7M7 18l1-1M11 15l1-1M22 18l1-1M25 15l1-1" stroke="#000" stroke-width="1.2"/><path d="M13.5 8.5v5M12.5 9.5l1-1" stroke="#000"/><rect x="15" y="12.5" width="1.2" height="1.2"/><path d="M17.5 9.5q1-1.5 2.5-0.5t-0.5 2l-2 2.5h3" stroke="#000" fill="none"/><path d="M29 17l3 3-3 3z" fill="#000"/></svg></div>
<div class="a btn" style="left:175px;top:393px;width:34px;height:24px"><svg style="left:-1px;top:-1px" width="36" height="26" viewBox="0 0 36 26"><text x="8" y="20" font-size="19" font-family="Liberation Serif" font-weight="bold" letter-spacing="0">A</text><path d="M29 15l3 3-3 3z" fill="#000"/></svg></div>
<div class="a btn" style="left:175px;top:417px;width:34px;height:26px"><svg style="left:-1px;top:-1px" width="36" height="28" viewBox="0 0 36 28"><path d="M9.5 6.5H14.5L16.5 8.5V5.5H21.5V10.5H24.5V19.5H9.5Z" fill="#fff" stroke="#000" stroke-width="1.2"/><path d="M11.5 8.5V17.5H22.5" stroke="#000" fill="none" stroke-width="1.2"/><path d="M14 13h5M15 15h3M17 11h2" stroke="#000"/></svg></div>
<div class="a prs" style="left:175px;top:443px;width:34px;height:23px"><svg style="left:-1px;top:-1px" width="36" height="25" viewBox="0 0 36 25"><rect x="4.5" y="4.5" width="28" height="18" fill="none" stroke="#000" stroke-dasharray="1 1" shape-rendering="crispEdges"/><path d="M7.5 12.5L12.5 7.5H23L15.5 13.5L20 17.5L28.5 19.5H7.5Z" fill="url(#h1)" stroke="#000" stroke-width="1.2"/></svg></div>
<div class="a btn" style="left:175px;top:466px;width:34px;height:26px"><svg style="left:-1px;top:-1px" width="36" height="28" viewBox="0 0 36 28"><path d="M9 19L21 8" stroke="#000" stroke-width="1.2"/><path d="M28 17l4 4-4 4z" fill="#000"/></svg></div>
<div class="a btn" style="left:175px;top:492px;width:34px;height:24px"><svg style="left:-1px;top:-1px" width="36" height="26" viewBox="0 0 36 26"><path d="M10 8V6H13M22 6H25V8M10 17v2h3M22 19h3v-2" stroke="#000" fill="none" stroke-width="1.2"/><path d="M13.5 7.5h7l1 1v9h-8z" fill="#fff" stroke="#000" stroke-width="1.2"/><path d="M15 11h3v3h-3zM16 13l4 3" stroke="#000" fill="none"/></svg></div>
<div class="a btn" style="left:175px;top:516px;width:34px;height:25px"><svg style="left:-1px;top:-1px" width="36" height="27" viewBox="0 0 36 27"><path d="M17.5 7v11M12 12.5h11M13.5 8.5l8 8M21.5 8.5l-8 8" stroke="#000" stroke-width="1.1"/></svg></div>
<div class="a btn" style="left:175px;top:541px;width:34px;height:26px"><svg style="left:-1px;top:-1px" width="36" height="28" viewBox="0 0 36 28"><path d="M8 14.5H21M21.5 15.5v2M21 18.5H30" stroke="#000" stroke-width="1.1"/><path d="M7 15L10 11.5L13 15Z" fill="#000"/><path d="M25 19L28 15.5L31 19Z" fill="#000"/></svg></div>
<div class="a btn" style="left:175px;top:567px;width:34px;height:24px"><svg style="left:-1px;top:-1px" width="36" height="26" viewBox="0 0 36 26"><circle cx="17.5" cy="12.5" r="8" fill="none" stroke="#000" stroke-dasharray="1 1"/><rect x="13" y="5" width="4" height="15" fill="#000"/><path d="M14 7l2 2M14 11l2 2M14 15l2 2" stroke="#fff"/><path d="M17 13h8M17 15h8" stroke="#000"/><path d="M17 11V5" stroke="#000"/></svg></div>
<div class="a btn" style="left:175px;top:591px;width:34px;height:24px"><svg style="left:-1px;top:-1px" width="36" height="26" viewBox="0 0 36 26"><rect x="13" y="8" width="8" height="7" fill="#000"/><circle cx="16" cy="8" r="3" fill="#000"/><path d="M21 10l4-2v6l-4-2z" fill="#000"/><path d="M17 15v6M17 16l-5 5M17 16l5 5" stroke="#000"/></svg></div>
<!-- /TOOLS -->

<!-- ===== NAVIGATOR ===== -->
<div class="a" style="left:3px;top:380px;width:170px;height:343px;background:#0b58ee"></div>
<div class="a twt" style="left:3px;top:380px;width:170px;height:21px"><div class="tt" style="left:2px;top:7px">Navigator</div></div>
<div class="a" style="left:3px;top:719px;width:170px;height:4px;background:linear-gradient(#0846e0 0,#0846e0 1px,#0024c0 1px)"></div><div class="a" style="left:168px;top:401px;width:5px;height:322px;background:linear-gradient(90deg,#0b58ee 0,#0846e0 1px,#0024c0 2px)"></div>
<div class="a cls" style="left:154px;top:386px"></div>
<div class="a bg" style="left:7px;top:401px;width:161px;height:318px"></div>
<div class="a btn" style="left:11px;top:405px;width:44px;height:20px">
  <svg style="left:8px;top:2px" width="32" height="15" viewBox="0 0 32 15"><rect x="0.5" y="0.5" width="10" height="13" fill="#fff" stroke="#000"/><path d="M3 3h3l-1.5 2z" fill="#000"/><rect x="3" y="6" width="1" height="1"/><rect x="6" y="6" width="1" height="1"/><rect x="3" y="9" width="1" height="1"/><rect x="6" y="9" width="1" height="1"/><rect x="3" y="12" width="1" height="1"/><path d="M12.5 13.5V6.5L16.5 2.5H19L24.5 7.5V13.5Z" fill="#f0c060" stroke="#000"/><path d="M16 6.5H24.5V13.5H16Z" fill="#f08850" stroke="#000"/><path d="M27 9l3 3-3 3z" fill="#000"/></svg>
</div>
<div class="a prs" style="left:145px;top:405px;width:20px;height:20px">
  <svg style="left:2px;top:2px" width="16" height="16" viewBox="0 0 16 16"><path d="M5 3Q9 0 12 3Q14 7 11 10Q7 12 4 10Q2 6 5 3Z" fill="#222"/><path d="M8 3Q11 2 12 5Q10 7 8 6Z" fill="#aaa"/><path d="M5 11L1 14" stroke="#000"/></svg>
</div>
<!-- tabs -->
<div class="a" style="left:11px;top:449px;width:154px;height:192px;border:1px solid;border-color:#fff #716f64 #716f64 #fff;box-shadow:inset -1px -1px 0 #aca899"></div>
<div class="a" style="left:13px;top:431px;width:66px;height:19px;border:1px solid;border-color:#fff #aca899 transparent #fff;border-radius:2px 2px 0 0;background:#ece9d8"><span class="a" style="left:5px;top:3px;letter-spacing:-0.4px">Project Map</span></div>
<div class="a" style="left:79px;top:428px;width:56px;height:22px;border:1px solid;border-color:#fff #716f64 transparent #fff;box-shadow:inset -1px 0 0 #aca899;border-radius:2px 2px 0 0;background:#ece9d8"><span class="a" style="left:5px;top:2px;letter-spacing:-0.45px">View Sets</span></div>
<div class="a btn" style="left:17px;top:458px;width:118px;height:20px">
  <span class="a" style="left:7px;top:3px">Project Documents</span>
  <div class="a tri" style="left:106px;top:5px"></div>
</div>
<div class="a btn" style="left:139px;top:458px;width:22px;height:20px"><div class="a tri" style="left:8px;top:3px;border-width:6px 0 6px 7px"></div></div>
<!-- tree -->
<div class="a" style="left:15px;top:485px;width:146px;height:147px;background:#fff;border:1px solid;border-color:#716f64 #fff #fff #716f64;box-shadow:inset 1px 1px 0 #aca899"></div>
<!-- TREE_PLACEHOLDER -->
<div class="a" style="left:18px;top:493px;width:6px;height:1px;background-image:repeating-linear-gradient(90deg,#a0a0a0 0 1px,transparent 1px 2px)"></div>
<div class="a" style="left:31px;top:501px;width:1px;height:104px;background-image:repeating-linear-gradient(180deg,#a0a0a0 0 1px,transparent 1px 2px)"></div>
<div class="a" style="left:50px;top:517px;width:1px;height:25px;background-image:repeating-linear-gradient(180deg,#a0a0a0 0 1px,transparent 1px 2px)"></div>
<svg style="left:24px;top:486px" width="16" height="14" viewBox="0 0 16 14"><defs><linearGradient id="fg0" x1="0" y1="0" x2="1" y2="1"><stop offset="0" stop-color="#fdf2b0"/><stop offset="0.6" stop-color="#e8c850"/><stop offset="1" stop-color="#c89a20"/></linearGradient></defs><path d="M0.5 3.5V1.5H6.5L7.5 2.5H14.5V12.5H0.5Z" fill="url(#fg0)" stroke="#8a6a10"/><path d="M1 13.5H15.5V3.5" stroke="#3a2a00" fill="none"/></svg>
<div class="a" style="left:42px;top:487px">Drawings</div>
<div class="a" style="left:36px;top:509px;width:7px;height:1px;background-image:repeating-linear-gradient(90deg,#a0a0a0 0 1px,transparent 1px 2px)"></div>
<svg style="left:43px;top:502px" width="16" height="14" viewBox="0 0 16 14"><defs><linearGradient id="fg1" x1="0" y1="0" x2="1" y2="1"><stop offset="0" stop-color="#fdf2b0"/><stop offset="0.6" stop-color="#e8c850"/><stop offset="1" stop-color="#c89a20"/></linearGradient></defs><path d="M0.5 3.5V1.5H6.5L7.5 2.5H14.5V12.5H0.5Z" fill="url(#fg1)" stroke="#8a6a10"/><path d="M1 13.5H15.5V3.5" stroke="#3a2a00" fill="none"/></svg>
<div class="a" style="left:27px;top:505px;width:9px;height:9px;border:1px solid #a0a0a0;background:#fff"><div class="a" style="left:2px;top:3px;width:5px;height:1px;background:#000"></div></div>
<div class="a" style="left:62px;top:503px">Ceiling Plan</div>
<div class="a" style="left:51px;top:525px;width:11px;height:1px;background-image:repeating-linear-gradient(90deg,#a0a0a0 0 1px,transparent 1px 2px)"></div>
<svg style="left:62px;top:518px" width="16" height="14" viewBox="0 0 16 14"><path d="M0.5 0.5H6.5V6.5H14.5V12.5H0.5Z" fill="#f4e08a" stroke="#000"/><rect x="7" y="7" width="7" height="2" fill="#6ab0f0"/><rect x="3" y="9" width="11" height="3" fill="#f08850"/><path d="M2 2h2M2 3l2 0" stroke="#5a5"/><path d="M1 13.5H15.5" stroke="#000"/></svg>
<div class="a" style="left:81px;top:519px">1. Gallery</div>
<div class="a" style="left:51px;top:541px;width:11px;height:1px;background-image:repeating-linear-gradient(90deg,#a0a0a0 0 1px,transparent 1px 2px)"></div>
<svg style="left:62px;top:534px" width="16" height="14" viewBox="0 0 16 14"><path d="M0.5 0.5H6.5V6.5H14.5V12.5H0.5Z" fill="#f4e08a" stroke="#000"/><rect x="7" y="7" width="7" height="2" fill="#6ab0f0"/><rect x="3" y="9" width="11" height="3" fill="#f08850"/><path d="M2 2h2M2 3l2 0" stroke="#5a5"/><path d="M1 13.5H15.5" stroke="#000"/></svg>
<div class="a" style="left:80px;top:534px;width:77px;height:14px;border:1px solid #3a6ed8;background:#fff"></div>
<div class="a" style="left:81px;top:535px">0. Ground Floor</div>
<div class="a" style="left:36px;top:557px;width:7px;height:1px;background-image:repeating-linear-gradient(90deg,#a0a0a0 0 1px,transparent 1px 2px)"></div>
<svg style="left:43px;top:550px" width="16" height="14" viewBox="0 0 16 14"><defs><linearGradient id="fg4" x1="0" y1="0" x2="1" y2="1"><stop offset="0" stop-color="#fdf2b0"/><stop offset="0.6" stop-color="#e8c850"/><stop offset="1" stop-color="#c89a20"/></linearGradient></defs><path d="M0.5 3.5V1.5H6.5L7.5 2.5H14.5V12.5H0.5Z" fill="url(#fg4)" stroke="#8a6a10"/><path d="M1 13.5H15.5V3.5" stroke="#3a2a00" fill="none"/></svg>
<div class="a" style="left:27px;top:553px;width:9px;height:9px;border:1px solid #a0a0a0;background:#fff"><div class="a" style="left:2px;top:3px;width:5px;height:1px;background:#000"></div><div class="a" style="left:4px;top:1px;width:1px;height:5px;background:#000"></div></div>
<div class="a" style="left:62px;top:551px">Floor Plan</div>
<div class="a" style="left:36px;top:573px;width:7px;height:1px;background-image:repeating-linear-gradient(90deg,#a0a0a0 0 1px,transparent 1px 2px)"></div>
<svg style="left:43px;top:566px" width="16" height="14" viewBox="0 0 16 14"><defs><linearGradient id="fg5" x1="0" y1="0" x2="1" y2="1"><stop offset="0" stop-color="#fdf2b0"/><stop offset="0.6" stop-color="#e8c850"/><stop offset="1" stop-color="#c89a20"/></linearGradient></defs><path d="M0.5 3.5V1.5H6.5L7.5 2.5H14.5V12.5H0.5Z" fill="url(#fg5)" stroke="#8a6a10"/><path d="M1 13.5H15.5V3.5" stroke="#3a2a00" fill="none"/></svg>
<div class="a" style="left:27px;top:569px;width:9px;height:9px;border:1px solid #a0a0a0;background:#fff"><div class="a" style="left:2px;top:3px;width:5px;height:1px;background:#000"></div><div class="a" style="left:4px;top:1px;width:1px;height:5px;background:#000"></div></div>
<div class="a" style="left:62px;top:567px">Site Plan</div>
<div class="a" style="left:36px;top:589px;width:7px;height:1px;background-image:repeating-linear-gradient(90deg,#a0a0a0 0 1px,transparent 1px 2px)"></div>
<svg style="left:43px;top:582px" width="16" height="14" viewBox="0 0 16 14"><defs><linearGradient id="fg6" x1="0" y1="0" x2="1" y2="1"><stop offset="0" stop-color="#fdf2b0"/><stop offset="0.6" stop-color="#e8c850"/><stop offset="1" stop-color="#c89a20"/></linearGradient></defs><path d="M0.5 3.5V1.5H6.5L7.5 2.5H14.5V12.5H0.5Z" fill="url(#fg6)" stroke="#8a6a10"/><path d="M1 13.5H15.5V3.5" stroke="#3a2a00" fill="none"/></svg>
<div class="a" style="left:27px;top:585px;width:9px;height:9px;border:1px solid #a0a0a0;background:#fff"><div class="a" style="left:2px;top:3px;width:5px;height:1px;background:#000"></div><div class="a" style="left:4px;top:1px;width:1px;height:5px;background:#000"></div></div>
<div class="a" style="left:62px;top:583px">Elevations</div>
<div class="a" style="left:36px;top:605px;width:7px;height:1px;background-image:repeating-linear-gradient(90deg,#a0a0a0 0 1px,transparent 1px 2px)"></div>
<svg style="left:43px;top:598px" width="16" height="14" viewBox="0 0 16 14"><defs><linearGradient id="fg7" x1="0" y1="0" x2="1" y2="1"><stop offset="0" stop-color="#fdf2b0"/><stop offset="0.6" stop-color="#e8c850"/><stop offset="1" stop-color="#c89a20"/></linearGradient></defs><path d="M0.5 3.5V1.5H6.5L7.5 2.5H14.5V12.5H0.5Z" fill="url(#fg7)" stroke="#8a6a10"/><path d="M1 13.5H15.5V3.5" stroke="#3a2a00" fill="none"/></svg>
<div class="a" style="left:27px;top:601px;width:9px;height:9px;border:1px solid #a0a0a0;background:#fff"><div class="a" style="left:2px;top:3px;width:5px;height:1px;background:#000"></div><div class="a" style="left:4px;top:1px;width:1px;height:5px;background:#000"></div></div>
<div class="a" style="left:62px;top:599px">Sections</div>
<div class="a" style="left:17px;top:616px;width:142px;height:15px;background:#eef3fd"></div>
<div class="a" style="left:18px;top:616px;width:15px;height:15px;border-radius:2px;background:linear-gradient(#c8d8fb,#b4c8f6);border:1px solid #fff"><svg style="left:3px;top:2px" width="8" height="10"><path d="M6 1L2 5L6 9" stroke="#4d6185" stroke-width="2" fill="none"/></svg></div>
<div class="a" style="left:44px;top:616px;width:98px;height:15px;border-radius:2px;background:linear-gradient(#cddcfc,#b9ccf8);border:1px solid #fff"><div class="a" style="left:44px;top:4px;width:8px;height:6px;background-image:repeating-linear-gradient(90deg,#8aa8e8 0 1px,transparent 1px 2px)"></div></div>
<div class="a" style="left:142px;top:616px;width:16px;height:15px;border-radius:2px;background:linear-gradient(#c8d8fb,#b4c8f6);border:1px solid #fff"><svg style="left:4px;top:2px" width="8" height="10"><path d="M2 1L6 5L2 9" stroke="#4d6185" stroke-width="2" fill="none"/></svg></div>
<!-- /TREE -->
<div class="a" style="left:11px;top:645px;letter-spacing:-0.3px">Plan: 0. Ground Floor</div>
<div class="a" style="left:12px;top:659px;width:152px;height:13px;background:#f4f3ec;border-radius:4px"></div>
<div class="a tri" style="left:20px;top:662px;border-width:6px 4.5px 0 4.5px;border-color:#000 transparent transparent transparent"></div>
<div class="a" style="left:36px;top:658px">View Settings:</div>
<svg style="left:14px;top:681px" width="10" height="9" viewBox="0 0 10 9"><path d="M1 2h7l-2 1H1M1 4.5h7l-2 1H1M1 7h7l-2 1H1" stroke="#000" fill="none"/></svg>
<div class="a" style="left:23px;top:679px">Layer comb.</div>
<div class="a btn" style="left:91px;top:678px;width:73px;height:16px"><span class="a" style="left:4px;top:1px;letter-spacing:-0.45px">Ceiling Plan</span><div class="a tri" style="left:62px;top:3px"></div></div>
<svg style="left:13px;top:699px" width="10" height="7" viewBox="0 0 10 7"><rect x="0.5" y="0.5" width="9" height="6" fill="#fff" stroke="#000"/><path d="M3 1v2M5 1v2M7 1v2" stroke="#000"/></svg>
<div class="a" style="left:23px;top:697px">Scale</div>
<div class="a btn" style="left:91px;top:696px;width:73px;height:16px"><span class="a" style="left:5px;top:1px">1:100</span><div class="a tri" style="left:62px;top:3px"></div></div>


<!-- DRAWING_PLACEHOLDER -->
<!-- ===== DRAWING WINDOW ===== -->
<div class="a" style="left:213px;top:108px;width:779px;height:540px;background:#0b58ee;border-radius:7px 7px 0 0"></div>
<div class="a" style="left:213px;top:108px;width:779px;height:30px;border-radius:7px 7px 0 0;background:linear-gradient(#0840d8 0,#3d95ff 1px,#3d95ff 3px,#0a60f0 4px,#0056e8 6px,#0056e8 18px,#0866f4 20px,#0866f4 27px,#0046d8 28px,#0036c8 30px)"></div>
<div class="a" style="left:988px;top:138px;width:4px;height:510px;background:linear-gradient(90deg,#0b58ee 0,#0b58ee 3px,#0032c8 3px)"></div>
<div class="a" style="left:213px;top:643px;width:779px;height:5px;background:linear-gradient(#0b58ee 0,#0b58ee 3px,#0032c8 3px)"></div>
<svg style="left:220px;top:116px" width="14" height="16" viewBox="0 0 14 16"><path d="M0.5 0.5H9.5L13.5 4.5V15.5H0.5Z" fill="#e8e8e8" stroke="#333"/><rect x="2" y="2" width="2" height="2" fill="#d33"/><rect x="4" y="2" width="2" height="2" fill="#3a3"/><rect x="6" y="2" width="2" height="2" fill="#33d"/><path d="M3 7h7v7H3zM3 10h4M7 7v7" stroke="#333" fill="#aaa"/></svg>
<div class="a" style="left:238px;top:118px;color:#fff;font-weight:bold;font-size:14px;letter-spacing:-0.36px;text-shadow:1px 1px 0 #0a1e80">Step-14 / Ground Floor</div>
<div class="a xpb" style="left:919px;top:114px"><div class="a" style="left:4px;top:12px;width:7px;height:3px;background:#fff"></div></div>
<div class="a xpb" style="left:942px;top:114px"><div class="a" style="left:4px;top:4px;width:11px;height:11px;border:1px solid #fff;border-top-width:3px"></div></div>
<div class="a xpb xpc" style="left:965px;top:114px"><svg style="left:4px;top:4px" width="11" height="11"><path d="M1 1L10 10M10 1L1 10" stroke="#fff" stroke-width="2"/></svg></div>
<div class="a" style="left:217px;top:138px;width:771px;height:505px;background:#fff;border-top:1px solid #c8b890;border-left:1px solid #c8b890"></div>
<div class="a" style="left:218px;top:139px;width:769px;height:1px;background:#716f64"></div><div class="a" style="left:987px;top:139px;width:1px;height:504px;background:#fff"></div>
<div class="a" style="left:218px;top:139px;width:1px;height:504px;background:#716f64"></div>
<svg style="left:219px;top:140px" width="751" height="486" viewBox="219 140 751 486">
<defs><pattern id="stp" width="66" height="66" patternUnits="userSpaceOnUse"><path d="M0 0h1v1h-1zM4 0h1v1h-1zM7 1h1v1h-1zM9 1h1v1h-1zM11 1h1v1h-1zM14 0h1v1h-1zM18 2h1v1h-1zM21 0h1v1h-1zM25 2h1v1h-1zM28 1h1v1h-1zM32 0h1v1h-1zM34 0h1v1h-1zM35 0h1v1h-1zM39 2h1v1h-1zM41 1h1v1h-1zM46 1h1v1h-1zM48 0h1v1h-1zM50 0h1v1h-1zM55 1h1v1h-1zM56 1h1v1h-1zM60 0h1v1h-1zM64 2h1v1h-1zM0 4h1v1h-1zM4 5h1v1h-1zM8 3h1v1h-1zM11 3h1v1h-1zM13 5h1v1h-1zM15 4h1v1h-1zM17 4h1v1h-1zM22 4h1v1h-1zM25 4h1v1h-1zM28 4h1v1h-1zM31 5h1v1h-1zM33 4h1v1h-1zM35 5h1v1h-1zM40 5h1v1h-1zM43 3h1v1h-1zM45 4h1v1h-1zM47 4h1v1h-1zM50 3h1v1h-1zM53 5h1v1h-1zM56 3h1v1h-1zM60 5h1v1h-1zM62 4h1v1h-1zM1 8h1v1h-1zM5 8h1v1h-1zM6 8h1v1h-1zM11 6h1v1h-1zM13 6h1v1h-1zM15 7h1v1h-1zM20 7h1v1h-1zM22 7h1v1h-1zM25 6h1v1h-1zM29 8h1v1h-1zM32 8h1v1h-1zM32 7h1v1h-1zM35 6h1v1h-1zM38 6h1v1h-1zM42 6h1v1h-1zM44 6h1v1h-1zM47 6h1v1h-1zM50 8h1v1h-1zM53 6h1v1h-1zM57 6h1v1h-1zM61 8h1v1h-1zM63 7h1v1h-1zM1 9h1v1h-1zM3 11h1v1h-1zM7 8h1v1h-1zM10 11h1v1h-1zM14 10h1v1h-1zM16 11h1v1h-1zM18 9h1v1h-1zM23 11h1v1h-1zM26 11h1v1h-1zM28 11h1v1h-1zM30 10h1v1h-1zM32 9h1v1h-1zM36 10h1v1h-1zM41 10h1v1h-1zM44 11h1v1h-1zM47 9h1v1h-1zM49 11h1v1h-1zM52 10h1v1h-1zM55 11h1v1h-1zM58 11h1v1h-1zM61 10h1v1h-1zM64 10h1v1h-1zM1 14h1v1h-1zM5 12h1v1h-1zM6 12h1v1h-1zM11 14h1v1h-1zM12 14h1v1h-1zM17 13h1v1h-1zM18 13h1v1h-1zM21 11h1v1h-1zM26 13h1v1h-1zM28 14h1v1h-1zM30 14h1v1h-1zM34 12h1v1h-1zM36 12h1v1h-1zM39 13h1v1h-1zM42 13h1v1h-1zM44 14h1v1h-1zM48 13h1v1h-1zM51 14h1v1h-1zM54 14h1v1h-1zM57 13h1v1h-1zM60 12h1v1h-1zM61 14h1v1h-1zM0 16h1v1h-1zM5 16h1v1h-1zM6 16h1v1h-1zM10 17h1v1h-1zM12 16h1v1h-1zM15 15h1v1h-1zM19 16h1v1h-1zM22 16h1v1h-1zM26 16h1v1h-1zM28 16h1v1h-1zM31 16h1v1h-1zM33 16h1v1h-1zM36 17h1v1h-1zM40 17h1v1h-1zM44 15h1v1h-1zM45 17h1v1h-1zM49 15h1v1h-1zM52 17h1v1h-1zM55 17h1v1h-1zM56 17h1v1h-1zM60 16h1v1h-1zM64 17h1v1h-1zM0 18h1v1h-1zM4 18h1v1h-1zM6 18h1v1h-1zM10 18h1v1h-1zM13 19h1v1h-1zM17 20h1v1h-1zM18 18h1v1h-1zM20 19h1v1h-1zM24 18h1v1h-1zM27 20h1v1h-1zM31 18h1v1h-1zM32 20h1v1h-1zM37 19h1v1h-1zM38 17h1v1h-1zM43 18h1v1h-1zM44 20h1v1h-1zM49 20h1v1h-1zM50 20h1v1h-1zM53 20h1v1h-1zM57 20h1v1h-1zM59 18h1v1h-1zM62 18h1v1h-1zM0 21h1v1h-1zM3 21h1v1h-1zM8 21h1v1h-1zM10 21h1v1h-1zM13 22h1v1h-1zM15 22h1v1h-1zM20 20h1v1h-1zM23 21h1v1h-1zM25 23h1v1h-1zM27 22h1v1h-1zM31 23h1v1h-1zM33 23h1v1h-1zM37 22h1v1h-1zM39 21h1v1h-1zM41 21h1v1h-1zM44 22h1v1h-1zM47 21h1v1h-1zM50 23h1v1h-1zM55 22h1v1h-1zM56 22h1v1h-1zM59 21h1v1h-1zM62 23h1v1h-1zM2 25h1v1h-1zM2 24h1v1h-1zM7 25h1v1h-1zM9 25h1v1h-1zM11 24h1v1h-1zM15 24h1v1h-1zM17 23h1v1h-1zM21 24h1v1h-1zM25 25h1v1h-1zM28 25h1v1h-1zM31 26h1v1h-1zM33 24h1v1h-1zM38 24h1v1h-1zM40 25h1v1h-1zM43 25h1v1h-1zM46 25h1v1h-1zM47 25h1v1h-1zM51 26h1v1h-1zM55 26h1v1h-1zM57 26h1v1h-1zM61 25h1v1h-1zM63 25h1v1h-1zM1 28h1v1h-1zM4 26h1v1h-1zM8 28h1v1h-1zM10 28h1v1h-1zM13 26h1v1h-1zM16 27h1v1h-1zM17 27h1v1h-1zM22 27h1v1h-1zM25 29h1v1h-1zM28 27h1v1h-1zM30 28h1v1h-1zM34 28h1v1h-1zM37 26h1v1h-1zM40 27h1v1h-1zM41 27h1v1h-1zM46 28h1v1h-1zM49 27h1v1h-1zM51 27h1v1h-1zM54 26h1v1h-1zM58 29h1v1h-1zM59 27h1v1h-1zM64 29h1v1h-1zM1 30h1v1h-1zM3 32h1v1h-1zM6 31h1v1h-1zM9 31h1v1h-1zM14 29h1v1h-1zM17 31h1v1h-1zM20 31h1v1h-1zM22 29h1v1h-1zM24 31h1v1h-1zM26 31h1v1h-1zM32 31h1v1h-1zM35 30h1v1h-1zM36 30h1v1h-1zM41 31h1v1h-1zM42 29h1v1h-1zM44 31h1v1h-1zM48 32h1v1h-1zM50 30h1v1h-1zM54 30h1v1h-1zM57 32h1v1h-1zM61 31h1v1h-1zM63 32h1v1h-1zM2 34h1v1h-1zM5 33h1v1h-1zM8 34h1v1h-1zM9 32h1v1h-1zM14 32h1v1h-1zM16 33h1v1h-1zM18 34h1v1h-1zM23 33h1v1h-1zM25 33h1v1h-1zM28 33h1v1h-1zM30 35h1v1h-1zM33 33h1v1h-1zM38 35h1v1h-1zM39 32h1v1h-1zM41 32h1v1h-1zM44 33h1v1h-1zM48 35h1v1h-1zM52 33h1v1h-1zM54 33h1v1h-1zM57 33h1v1h-1zM59 33h1v1h-1zM64 32h1v1h-1zM1 37h1v1h-1zM5 36h1v1h-1zM6 36h1v1h-1zM10 36h1v1h-1zM14 37h1v1h-1zM17 36h1v1h-1zM18 38h1v1h-1zM23 37h1v1h-1zM26 36h1v1h-1zM26 35h1v1h-1zM31 37h1v1h-1zM35 37h1v1h-1zM37 37h1v1h-1zM39 37h1v1h-1zM41 37h1v1h-1zM44 38h1v1h-1zM49 37h1v1h-1zM50 35h1v1h-1zM54 37h1v1h-1zM57 36h1v1h-1zM60 35h1v1h-1zM62 36h1v1h-1zM2 40h1v1h-1zM5 39h1v1h-1zM6 39h1v1h-1zM11 40h1v1h-1zM12 38h1v1h-1zM16 40h1v1h-1zM18 39h1v1h-1zM22 41h1v1h-1zM24 39h1v1h-1zM28 38h1v1h-1zM31 40h1v1h-1zM33 38h1v1h-1zM38 39h1v1h-1zM40 39h1v1h-1zM42 41h1v1h-1zM45 38h1v1h-1zM47 39h1v1h-1zM52 41h1v1h-1zM53 39h1v1h-1zM56 41h1v1h-1zM59 38h1v1h-1zM62 39h1v1h-1zM2 43h1v1h-1zM5 44h1v1h-1zM8 42h1v1h-1zM9 44h1v1h-1zM14 41h1v1h-1zM16 42h1v1h-1zM18 42h1v1h-1zM21 41h1v1h-1zM24 42h1v1h-1zM29 41h1v1h-1zM30 43h1v1h-1zM34 42h1v1h-1zM35 42h1v1h-1zM39 44h1v1h-1zM43 41h1v1h-1zM45 43h1v1h-1zM49 41h1v1h-1zM50 41h1v1h-1zM55 43h1v1h-1zM58 43h1v1h-1zM59 43h1v1h-1zM62 42h1v1h-1zM0 46h1v1h-1zM5 46h1v1h-1zM8 44h1v1h-1zM11 47h1v1h-1zM12 44h1v1h-1zM16 45h1v1h-1zM20 44h1v1h-1zM23 46h1v1h-1zM26 46h1v1h-1zM28 45h1v1h-1zM30 45h1v1h-1zM34 44h1v1h-1zM35 46h1v1h-1zM39 47h1v1h-1zM43 47h1v1h-1zM45 44h1v1h-1zM47 45h1v1h-1zM52 45h1v1h-1zM53 45h1v1h-1zM57 46h1v1h-1zM61 46h1v1h-1zM63 44h1v1h-1zM2 48h1v1h-1zM4 48h1v1h-1zM8 47h1v1h-1zM9 47h1v1h-1zM12 49h1v1h-1zM16 48h1v1h-1zM18 50h1v1h-1zM23 49h1v1h-1zM26 47h1v1h-1zM27 49h1v1h-1zM31 49h1v1h-1zM32 47h1v1h-1zM37 48h1v1h-1zM39 49h1v1h-1zM44 47h1v1h-1zM46 49h1v1h-1zM47 47h1v1h-1zM50 48h1v1h-1zM55 47h1v1h-1zM58 48h1v1h-1zM60 48h1v1h-1zM63 47h1v1h-1zM0 52h1v1h-1zM4 50h1v1h-1zM6 52h1v1h-1zM9 51h1v1h-1zM12 51h1v1h-1zM17 53h1v1h-1zM19 50h1v1h-1zM20 52h1v1h-1zM24 52h1v1h-1zM27 52h1v1h-1zM29 51h1v1h-1zM34 52h1v1h-1zM36 51h1v1h-1zM39 52h1v1h-1zM41 51h1v1h-1zM46 53h1v1h-1zM49 53h1v1h-1zM51 50h1v1h-1zM55 51h1v1h-1zM58 51h1v1h-1zM61 50h1v1h-1zM64 50h1v1h-1zM1 55h1v1h-1zM3 54h1v1h-1zM7 54h1v1h-1zM9 53h1v1h-1zM13 55h1v1h-1zM16 53h1v1h-1zM20 53h1v1h-1zM22 54h1v1h-1zM25 54h1v1h-1zM27 54h1v1h-1zM30 55h1v1h-1zM33 54h1v1h-1zM35 54h1v1h-1zM39 53h1v1h-1zM43 55h1v1h-1zM45 53h1v1h-1zM48 53h1v1h-1zM51 53h1v1h-1zM54 53h1v1h-1zM58 55h1v1h-1zM60 53h1v1h-1zM63 54h1v1h-1zM2 58h1v1h-1zM5 58h1v1h-1zM6 58h1v1h-1zM10 58h1v1h-1zM14 58h1v1h-1zM14 57h1v1h-1zM19 56h1v1h-1zM23 56h1v1h-1zM26 56h1v1h-1zM28 58h1v1h-1zM30 56h1v1h-1zM33 56h1v1h-1zM35 56h1v1h-1zM38 58h1v1h-1zM43 58h1v1h-1zM44 58h1v1h-1zM47 57h1v1h-1zM52 57h1v1h-1zM55 57h1v1h-1zM57 58h1v1h-1zM59 58h1v1h-1zM63 57h1v1h-1zM2 59h1v1h-1zM5 60h1v1h-1zM8 59h1v1h-1zM10 61h1v1h-1zM13 60h1v1h-1zM16 60h1v1h-1zM19 61h1v1h-1zM21 59h1v1h-1zM25 59h1v1h-1zM27 60h1v1h-1zM31 59h1v1h-1zM34 60h1v1h-1zM36 59h1v1h-1zM38 60h1v1h-1zM43 61h1v1h-1zM45 60h1v1h-1zM49 60h1v1h-1zM52 61h1v1h-1zM53 61h1v1h-1zM56 60h1v1h-1zM59 61h1v1h-1zM61 60h1v1h-1zM2 62h1v1h-1zM4 63h1v1h-1zM8 62h1v1h-1zM8 64h1v1h-1zM14 64h1v1h-1zM16 63h1v1h-1zM19 63h1v1h-1zM21 62h1v1h-1zM24 62h1v1h-1zM27 64h1v1h-1zM31 64h1v1h-1zM34 62h1v1h-1zM37 63h1v1h-1zM40 63h1v1h-1zM42 63h1v1h-1zM47 62h1v1h-1zM49 61h1v1h-1zM52 64h1v1h-1zM55 62h1v1h-1zM56 64h1v1h-1zM60 63h1v1h-1zM63 64h1v1h-1z" fill="#000"/></pattern></defs>
<path d="M226.5 141V626M262.5 141V626M299.5 141V626M336.5 141V626M373.5 141V626M410.5 141V626M447.5 141V626M483.5 141V626M520.5 141V626M557.5 141V626M594.5 141V626M631.5 141V626M667.5 141V626M704.5 141V626M741.5 141V626M778.5 141V626M815.5 141V626M852.5 141V626M888.5 141V626M925.5 141V626M962.5 141V626M220 153.5H970M220 189.5H970M220 226.5H970M220 263.5H970M220 300.5H970M220 337.5H970M220 373.5H970M220 410.5H970M220 447.5H970M220 484.5H970M220 521.5H970M220 558.5H970M220 594.5H970" stroke="#dcdcdc" stroke-width="1" fill="none" shape-rendering="crispEdges"/>
<g shape-rendering="crispEdges" fill="none">
<rect x="373.5" y="189.5" width="442" height="446" stroke="#6b6358"/>
<path d="M373 263.5H816" stroke="#6b6358" stroke-dasharray="10.4 10.4" stroke-dashoffset="4.8"/>
</g>
<g fill="none" stroke="#000" stroke-width="1.1" shape-rendering="crispEdges">
<path d="M428.0 218.0 L436.5 216.8 L445.1 215.7 L453.6 214.7 L462.2 213.8 L470.8 213.1 L479.4 212.5 L487.9 212.0 L496.6 211.6 L505.2 211.4 L513.8 211.2 L522.4 211.2 L531.0 211.3 L539.6 211.5 L548.2 211.9 L556.8 212.4 L565.4 212.9 L574.0 213.7 L582.5 214.5 L591.1 215.4 L599.6 216.5 L608.2 217.7 L616.7 219.0 L625.2 220.4 L633.6 222.0 L642.1 223.6 L650.5 225.4 L658.9 227.3 L667.3 229.3 L675.6 231.4 L683.9 233.7 L692.2 236.1 L700.5 238.5 L708.7 241.1 L716.8 243.9 L725.0 246.7 L733.1 249.6 L741.1 252.7 L749.1 255.8 L757.1 259.1 L765.0 262.5"/><path d="M429.5 227.9 L437.9 226.7 L446.3 225.6 L454.7 224.7 L463.1 223.8 L471.6 223.1 L480.0 222.5 L488.5 222.0 L496.9 221.6 L505.4 221.4 L513.9 221.2 L522.3 221.2 L530.8 221.3 L539.3 221.5 L547.7 221.9 L556.2 222.3 L564.6 222.9 L573.1 223.6 L581.5 224.4 L589.9 225.4 L598.3 226.4 L606.7 227.6 L615.1 228.9 L623.4 230.3 L631.8 231.8 L640.1 233.4 L648.4 235.2 L656.6 237.0 L664.9 239.0 L673.1 241.1 L681.3 243.3 L689.4 245.7 L697.5 248.1 L705.6 250.7 L713.6 253.3 L721.6 256.1 L729.6 259.0 L737.5 262.0 L745.4 265.1 L753.2 268.3 L761.0 271.7"/><path d="M428.0 218.0L429.5 227.9M765.0 262.5L761.0 271.7"/><path d="M515.0 211.2L515.1 221.2M531.0 211.3L530.8 221.3M608.0 217.7L606.6 227.6M625.0 220.4L623.3 230.2M681.0 232.9L678.4 242.5M697.0 237.5L694.1 247.1"/>
</g>
<path d="M515.0 211.2 L517.7 211.2 L520.3 211.2 L523.0 211.2 L525.7 211.2 L528.3 211.3 L531.0 211.3M515.1 221.2 L517.7 221.2 L520.3 221.2 L522.9 221.2 L525.6 221.2 L528.2 221.3 L530.8 221.3M608.0 217.7 L610.8 218.1 L613.7 218.5 L616.5 219.0 L619.3 219.4 L622.2 219.9 L625.0 220.4M606.6 227.6 L609.3 228.0 L612.1 228.4 L614.9 228.8 L617.7 229.3 L620.5 229.8 L623.3 230.2M681.0 232.9 L683.7 233.6 L686.3 234.4 L689.0 235.1 L691.7 235.9 L694.3 236.7 L697.0 237.5M678.4 242.5 L681.0 243.3 L683.6 244.0 L686.3 244.7 L688.9 245.5 L691.5 246.3 L694.1 247.1" stroke="#fff" stroke-width="1.6" fill="none" shape-rendering="crispEdges"/>
<path d="M515.0 211.2 L517.7 211.2 L520.3 211.2 L523.0 211.2 L525.7 211.2 L528.3 211.3 L531.0 211.3M515.1 221.2 L517.7 221.2 L520.3 221.2 L522.9 221.2 L525.6 221.2 L528.2 221.3 L530.8 221.3M608.0 217.7 L610.8 218.1 L613.7 218.5 L616.5 219.0 L619.3 219.4 L622.2 219.9 L625.0 220.4M606.6 227.6 L609.3 228.0 L612.1 228.4 L614.9 228.8 L617.7 229.3 L620.5 229.8 L623.3 230.2M681.0 232.9 L683.7 233.6 L686.3 234.4 L689.0 235.1 L691.7 235.9 L694.3 236.7 L697.0 237.5M678.4 242.5 L681.0 243.3 L683.6 244.0 L686.3 244.7 L688.9 245.5 L691.5 246.3 L694.1 247.1" stroke="#f07a2a" stroke-width="1.1" fill="none" shape-rendering="crispEdges"/>
<g shape-rendering="crispEdges">
<rect x="420" y="310" width="349" height="100" fill="#fff"/><rect x="420" y="310" width="349" height="100" fill="url(#stp)"/>
<rect x="519" y="309" width="149" height="37" fill="#fff"/>
<g fill="none" stroke="#000">
<path d="M447.5 225V300.5M456.5 224V240.5M456.5 285V300.5M447.5 240.5H456.5M447.5 285.5H456.5"/>
<path d="M594.5 227V300.5M599.5 227V300.5"/>
<path d="M635.5 234V300.5M641.5 234V240M641.5 267V300.5"/>
<path d="M732.5 261V300.5M741.5 261V300.5"/>
<path d="M410.5 300.5H778.5V410.5M410.5 300.5V521M419.5 309.5H456.5M493.5 300.5V309.5H519M680 309.5H695.5V300.5M732.5 300.5V309.5H769.5V410.5M419.5 309.5V410.5M410 410.5H778.5"/>
<path d="M410.5 513.5H419.5V521M520.5 521V513.5H539.5V521M640.5 521V513.5H658.5V521M759.5 521V513.5H769.5V521"/>
<path d="M410.5 590.5h3v9h-3zM532.5 590.5h3v9h-3zM654.5 590.5h3v9h-3zM775.5 590.5h3v9h-3z"/>
</g>
<g fill="none" stroke="#0022ff"><path d="M635 234.5h7M635 267.5h7"/></g>
<g fill="none" stroke="#f07a2a">
<path d="M447.5 240.5V285M456.5 240.5V285M641.5 240V267M456.5 300.5H493.5M456.5 309.5H493.5M695.5 300.5H732.5M695.5 309.5H732.5"/>
<path d="M410.5 411V513M419.5 411V513M769.5 411V513M778.5 411V521M419.5 513.5H520M539.5 513.5H640M658.5 513.5H759.5"/>
</g>
<path d="M410.5 521.5H778.5" stroke="#6b6358" fill="none"/>
<path d="M519.5 309V346M679.5 309V346" stroke="#6b6358" fill="none"/>
<path d="M519 310H680" stroke="#6b6358" stroke-width="2" fill="none"/>
<path d="M519 345H680" stroke="#6b6358" stroke-width="2.4" fill="none"/>
<path d="M531 310V345M543 310V345M554 310V345M565 310V345M577 310V345M588 310V345M599 310V345M610 310V345M622 310V345M633 310V345M644 310V345M656 310V345M667 310V345" stroke="#6b6358" stroke-width="1.6" fill="none"/>
<path d="M519 327.5H587M603 327.5H615M626 327.5H638M650 327.5H667" stroke="#6b6358" fill="none"/>
<path d="M567 310L587 345M657 312L667 328L657 344M575 345L587 316" stroke="#6b6358" stroke-width="1.2" fill="none"/>
<path d="M493.5 300.5H695" stroke="#000" fill="none"/>
<path d="M577.5 457.5V512M577.5 457.5H610.5V512" stroke="#6b6358" stroke-dasharray="6 4" fill="none"/>
</g>
<g fill="none" stroke="#6b6b6b" stroke-width="1" shape-rendering="crispEdges">
<path d="M476 479L777 504M558 318L761 504M712 221L761 504"/>
<path d="M551 332h6M553 327l3 3M556 322v5M562 323l-2 4M566 330h-4M554 338l3-3M560 340l-1-4M566 337l-3-3"/><circle cx="559" cy="331" r="4"/>
<circle cx="591" cy="350" r="4.5"/>
</g>
<path d="M763 506l12 9-4 5-12-9z" fill="#707070"/>
<path d="M407 518l7 7M414 518l-7 7" stroke="#000" stroke-width="1.5"/>
<path d="M275.5 482.5V498L279.5 494.5L283.5 502.5L286 501.5L282.5 493.5H287Z" fill="#fff" stroke="#000" stroke-width="1.1" stroke-linejoin="miter"/>
</svg>
<!-- vscroll -->
<div class="a" style="left:970px;top:140px;width:16px;height:486px;background-color:#f4f3ee;background-image:repeating-conic-gradient(#fff 0 25%,#ece9d8 0 50%);background-size:2px 2px"></div>
<div class="a btn" style="left:970px;top:140px;width:16px;height:17px"><div class="a tri" style="left:3px;top:4px;border-width:0 4px 4px 4px;border-color:transparent transparent #000 transparent"></div></div>
<div class="a btn" style="left:970px;top:158px;width:16px;height:392px"></div>
<div class="a btn" style="left:970px;top:609px;width:16px;height:17px"><div class="a tri" style="left:3px;top:5px;border-width:4px 4px 0 4px;border-color:#000 transparent transparent transparent"></div></div>
<!-- hscroll -->
<div class="a" style="left:218px;top:626px;width:769px;height:16px;background-color:#f4f3ee;background-image:repeating-conic-gradient(#fff 0 25%,#ece9d8 0 50%);background-size:2px 2px"></div>
<!-- HBAR_PLACEHOLDER -->
<div class="a prs" style="left:218px;top:626px;width:24px;height:15px"><svg style="left:3px;top:1px" width="18" height="12" viewBox="0 0 18 12"><path d="M1 1h3l-1.5 2z" fill="#000"/><rect x="2" y="5" width="1" height="1"/><rect x="5" y="5" width="1" height="1"/><rect x="2" y="8" width="1" height="1"/><rect x="5" y="8" width="1" height="1"/><path d="M8.5 11.5V6.5L12 3L16.5 6.5V11.5Z" fill="#f0c060" stroke="#000"/><path d="M11.5 7.5H16.5V11.5H11.5Z" fill="#f08850" stroke="#000"/></svg></div>
<div class="a btn" style="left:242px;top:626px;width:24px;height:15px"><svg style="left:3px;top:0px" width="18" height="14" viewBox="0 0 18 14"><path d="M1.5 3.5H8M1.5 3.5V12.5H10" stroke="#000" fill="none" stroke-width="1.2"/><circle cx="10.5" cy="6.5" r="4" fill="none" stroke="#1a3a9a" stroke-width="1.5"/><path d="M13 9l3.5 3.5" stroke="#1a3a9a" stroke-width="2"/></svg></div>
<div class="a btn" style="left:266px;top:626px;width:65px;height:15px"><span class="a" style="left:20px;top:0px">1:100</span></div>
<div class="a btn" style="left:331px;top:626px;width:63px;height:15px"><span class="a" style="left:21px;top:0px;letter-spacing:-0.4px">101 %</span></div>
<div class="a btn" style="left:394px;top:626px;width:24px;height:15px"><div class="a tri" style="left:10px;top:3px"></div></div>
<div class="a btn" style="left:418px;top:626px;width:24px;height:15px"><svg style="left:3px;top:1px" width="18" height="13" viewBox="0 0 18 13"><circle cx="5.5" cy="5.5" r="4" fill="none" stroke="#1a2a9a" stroke-width="1.4"/><path d="M8 8l3 3" stroke="#1a2a9a" stroke-width="2"/><path d="M11 3h5M13.5 0.5v5M11 8h5" stroke="#000" stroke-width="1.3"/></svg></div>
<div class="a btn" style="left:442px;top:626px;width:24px;height:15px"><svg style="left:4px;top:1px" width="16" height="13" viewBox="0 0 16 13"><circle cx="6" cy="5.5" r="4.5" fill="none" stroke="#000" stroke-width="1.4"/><path d="M9 9l3.5 3.5" stroke="#000" stroke-width="2"/><path d="M3.5 5.5h5M6 3v5" stroke="#000" stroke-width="1.5"/></svg></div>
<div class="a btn" style="left:466px;top:626px;width:24px;height:15px"><svg style="left:4px;top:1px" width="16" height="13" viewBox="0 0 16 13"><circle cx="6" cy="5.5" r="4.5" fill="none" stroke="#000" stroke-width="1.4"/><path d="M9 9l3.5 3.5" stroke="#000" stroke-width="2"/><path d="M3.5 5.5h5" stroke="#000" stroke-width="1.5"/></svg></div>
<div class="a btn" style="left:490px;top:626px;width:24px;height:15px"><svg style="left:5px;top:1px" width="14" height="13" viewBox="0 0 14 13"><path d="M2 6Q1 4 3 4L5 7V2Q5 1 6 1T7 2V6V1Q7 0 8 0T9 1V6V2Q9 1 10 1T11 2V8Q11 12 7 12H6Q4 12 2 8Z" fill="#fff" stroke="#000"/></svg></div>
<div class="a btn" style="left:514px;top:626px;width:24px;height:15px"><svg style="left:4px;top:1px" width="16" height="13" viewBox="0 0 16 13"><circle cx="6" cy="5.5" r="4.5" fill="none" stroke="#000" stroke-width="1.4"/><path d="M9 9l3.5 3.5" stroke="#000" stroke-width="2"/><path d="M2 3v-2h2M8 1h2v2M2 8v2h2" stroke="#000"/></svg></div>
<div class="a btn" style="left:538px;top:626px;width:24px;height:15px"><svg style="left:2px;top:1px" width="20" height="13" viewBox="0 0 20 13"><path d="M1 5.5L5 2V4H7V7H5V9Z" fill="#000"/><circle cx="12" cy="5.5" r="4.5" fill="none" stroke="#000" stroke-width="1.4"/><path d="M15 9l3.5 3.5" stroke="#000" stroke-width="2"/></svg></div>
<div class="a btn" style="left:562px;top:626px;width:25px;height:15px"><svg style="left:2px;top:1px" width="20" height="13" viewBox="0 0 20 13"><circle cx="7" cy="5.5" r="4.5" fill="none" stroke="#b0ad9e" stroke-width="1.4"/><path d="M10 9l3.5 3.5" stroke="#b0ad9e" stroke-width="2"/><path d="M19 5.5L15 2V4H13V7H15V9Z" fill="#b0ad9e"/></svg></div>
<div class="a btn" style="left:587px;top:626px;width:17px;height:15px"><div class="a tri" style="left:5px;top:3px;border-width:4px 4px 4px 0;border-color:transparent #000 transparent transparent"></div></div>
<div class="a btn" style="left:604px;top:626px;width:302px;height:15px"></div>
<div class="a btn" style="left:954px;top:626px;width:16px;height:15px"><div class="a tri" style="left:6px;top:3px"></div></div>
<div class="a bg" style="left:970px;top:626px;width:17px;height:17px"><svg style="left:3px;top:3px" width="13" height="13" viewBox="0 0 13 13"><path d="M12 2L2 12M12 6L6 12M12 10L10 12" stroke="#aca899" stroke-width="1.2"/><path d="M12 3L3 12M12 7L7 12M12 11L11 12" stroke="#fff"/></svg></div>
<!-- /HBAR -->

<!-- /DRAWING -->



</body></html>
